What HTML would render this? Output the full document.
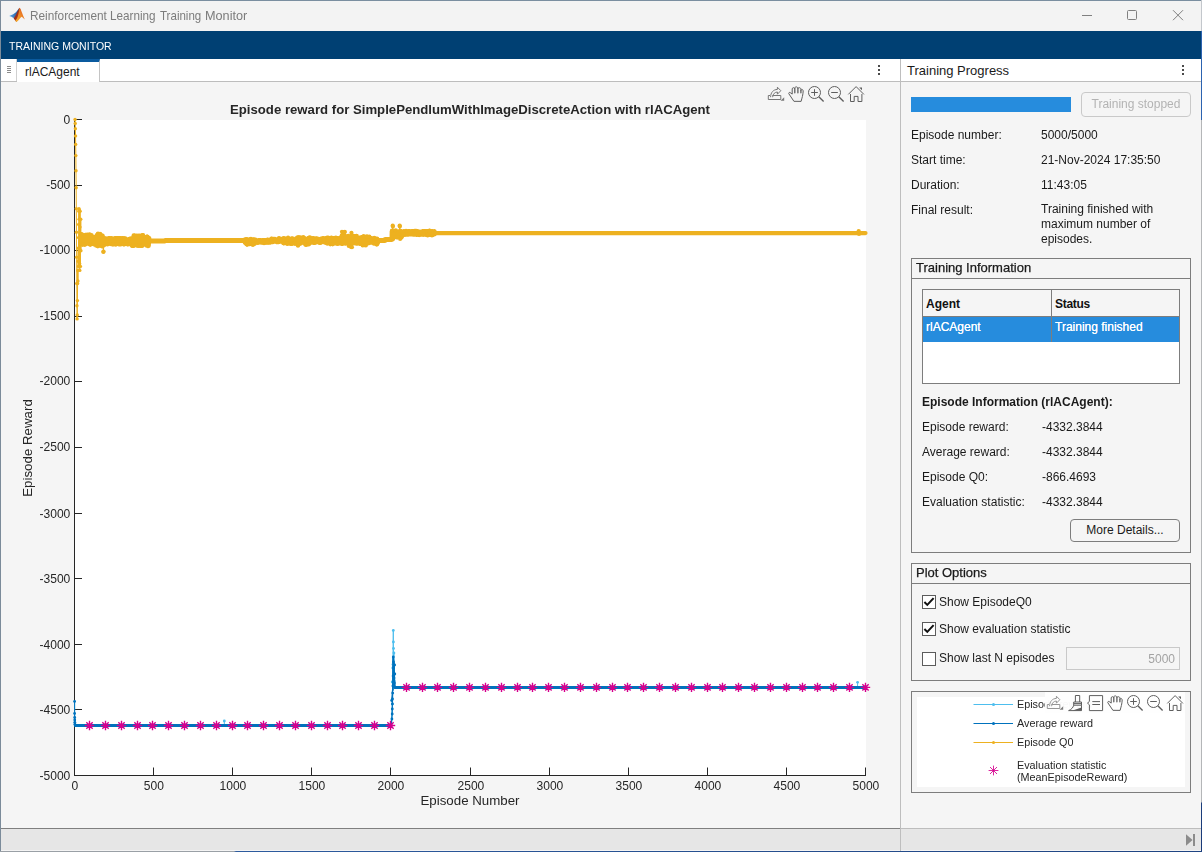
<!DOCTYPE html>
<html lang="en">
<head>
<meta charset="utf-8">
<title>Reinforcement Learning Training Monitor</title>
<style>
*{box-sizing:border-box;margin:0;padding:0}
html,body{width:1202px;height:852px;overflow:hidden;background:#f5f5f5}
body{position:relative;font-family:"Liberation Sans",Arial,sans-serif;font-size:12px;color:#1a1a1a;-webkit-font-smoothing:antialiased}
.abs,.win *{position:absolute}
.win{position:absolute;left:0;top:0;width:1202px;height:852px;background:#f5f5f5}
.edgeT{left:0;top:0;width:1202px;height:1px;background:#7a8ea0}
.edgeL{left:0;top:0;width:1px;height:852px;background:#7b8b9a}
.edgeR{left:1201px;top:0;width:1px;height:852px;background:linear-gradient(#c3c7cc 0,#c3c7cc 31px,#2c63b0 31px,#2c63b0 120px,#b4b6b8 120px,#b4b6b8 802px,#1c3f7c 803px,#1a3a78 100%)}
.edgeB{left:0;top:851px;width:1202px;height:1px;background:linear-gradient(90deg,#9aa0a6 0,#9aa0a6 234px,#2d5b9e 236px,#1f4482 100%)}
.titlebar{left:1px;top:1px;width:1200px;height:30px;background:#f3f3f3}
.title{left:0;top:8px;width:300px;height:16px;font-size:12.8px;line-height:16px;color:#7c7c7c;white-space:nowrap;will-change:transform}
.title span{top:0;transform-origin:0 0;white-space:nowrap}
.strip{left:1px;top:31px;width:1200px;height:28px;background:#004073}
.strip span{left:7.5px;top:8px;font-size:11.7px;line-height:14px;color:#fff;white-space:nowrap;transform:scaleX(.9);transform-origin:0 0}
.tabbar{left:1px;top:59px;width:899px;height:23px;background:#fff;border-bottom:1px solid #bdbdbd}
.tab{left:16px;top:0;width:83px;height:23px;background:#fff;border-top:3px solid #0a5a9e;border-right:1px solid #c4c4c4}
.tab span{left:8px;top:3px;line-height:14px;font-size:12px;white-space:nowrap;color:#1a1a1a}
.vdiv{left:900px;top:59px;width:1px;height:792px;background:#bebebe}
.rhead{left:901px;top:59px;width:300px;height:23px;background:#fff;border-bottom:1px solid #bdbdbd}
.rhead span{left:6px;top:4px;font-size:13px;line-height:15px;white-space:nowrap}
.status{left:1px;top:828px;width:1200px;height:23px;background:#e6e6e6;border-top:1px solid #bdbdbd;border-bottom:1px solid #f4f4f4}
.dot{width:2px;height:2px;background:#4a4a4a}
.lbl{white-space:nowrap;line-height:14px;font-size:12px}
.pbar{left:911px;top:97px;width:160px;height:15px;background:#268cdd}
.btn{border:1px solid #7d7d7d;border-radius:4px;background:#f5f5f5;text-align:center;white-space:nowrap}
.panel{border:1px solid #7d7d7d}
.phead{left:0;top:0;right:0;height:20px;border-bottom:1px solid #7d7d7d}
.phead span{left:4px;top:1px;font-size:13px;line-height:15px;white-space:nowrap;-webkit-text-stroke:0.25px #1a1a1a}
.cb{width:14px;height:14px;border:1px solid #5c5c5c;background:#fff}
svg{position:absolute;overflow:visible}
.plot{left:1px;top:82px;will-change:transform}
</style>
</head>
<body>
<div class="win">
<div class="titlebar"></div>
<div class="title"><span style="left:30px;transform:scaleX(.924)">Reinforcement </span><span style="left:109.9px;transform:scaleX(.915)">Learning </span><span style="left:159.5px;transform:scaleX(.902)">Training </span><span style="left:204.8px;transform:scaleX(.99)">Monitor</span></div>
<svg style="left:0;top:0" width="40" height="30" viewBox="0 0 40 30">
 <defs>
  <linearGradient id="lgB" x1="0" y1="0" x2="1" y2="0"><stop offset="0" stop-color="#5aa6e8"/><stop offset="1" stop-color="#1d4f92"/></linearGradient>
  <linearGradient id="lgO" x1="0" y1="1" x2="1" y2="0"><stop offset="0" stop-color="#f6b12c"/><stop offset="0.5" stop-color="#ef8a26"/><stop offset="1" stop-color="#d5401c"/></linearGradient>
  <linearGradient id="lgR" x1="0" y1="0" x2="1" y2="1"><stop offset="0" stop-color="#7a2418"/><stop offset="1" stop-color="#c23a1a"/></linearGradient>
 </defs>
 <path d="M9.2 15.9 L13.2 14.3 L16 12.2 L18.3 9.3 L19.3 8 L18.2 12 L16.3 15.6 L14.6 17.6 L13.4 18 L11.5 16.7 Z" fill="url(#lgB)"/>
 <path d="M13.6 18.2 L15.6 15.6 L17.8 11 L19.4 7.8 L20.4 9.5 L19.8 14.5 L18 19.5 L16.4 21.9 L14.8 20 Z" fill="url(#lgR)"/>
 <path d="M19.5 7.7 C20.6 8.2 21.4 11 22.3 13.6 C23.2 16.2 24 18 24.9 19.4 C23.6 18.6 22.6 17.4 21.6 16.8 C20.4 17.6 19.4 19.4 18.2 20.6 C17.4 21.4 16.8 21.9 16.3 22 L15.4 20.6 C16.6 19.4 17.6 17 18.3 14.4 C18.9 12 19.2 9.6 19.5 7.7 Z" fill="url(#lgO)"/>
</svg>

<svg style="left:1070px;top:1px" width="131" height="30" viewBox="1070 1 131 30" fill="none" stroke="#808080" stroke-width="1">
 <path d="M1082 15.5H1092"/>
 <rect x="1127.5" y="10.5" width="9" height="9" rx="1"/>
 <path d="M1173 10.2L1183 20.2M1183 10.2L1173 20.2"/>
</svg>

<div class="strip"><span>TRAINING MONITOR</span></div>
<div class="tabbar"><div class="tab"><span>rlACAgent</span></div></div>
<div class="rhead"><span>Training Progress</span></div>
<div style="left:7px;top:66px;width:4px;height:1px;background:#8c8c8c"></div>
<div style="left:7px;top:68px;width:4px;height:1px;background:#8c8c8c"></div>
<div style="left:7px;top:70px;width:4px;height:1px;background:#8c8c8c"></div>
<div style="left:7px;top:72px;width:4px;height:1px;background:#8c8c8c"></div>
<div style="left:1px;top:59px;width:16px;height:22px;border-right:1px solid #d0d0d0"></div>
<div class="dot" style="left:878px;top:65px"></div><div class="dot" style="left:878px;top:69px"></div><div class="dot" style="left:878px;top:73px"></div>
<div class="dot" style="left:1182px;top:65px"></div><div class="dot" style="left:1182px;top:69px"></div><div class="dot" style="left:1182px;top:73px"></div>

<svg class="plot" width="899" height="746" viewBox="1 82 899 746">
<rect x="75" y="120" width="791" height="656" fill="#fff"/>
<path d="M74.5 119V776M74 775.5H866M74.5 775.5V767.5M153.5 775.5V767.5M232.5 775.5V767.5M311.5 775.5V767.5M390.5 775.5V767.5M470.5 775.5V767.5M549.5 775.5V767.5M628.5 775.5V767.5M707.5 775.5V767.5M786.5 775.5V767.5M865.5 775.5V767.5M74.5 119.5H82M74.5 185.5H82M74.5 250.5H82M74.5 316.5H82M74.5 381.5H82M74.5 447.5H82M74.5 513.5H82M74.5 578.5H82M74.5 644.5H82M74.5 709.5H82M74.5 775.5H82" stroke="#262626" stroke-width="1" fill="none"/>
<g fill="none" stroke-linejoin="round" stroke-linecap="round">
<polyline points="75.69,725.5 391.14,725.5" stroke="#4DBEEE" stroke-width="2.8"/><polyline points="394.90,687.4 865.50,687.4" stroke="#4DBEEE" stroke-width="2.8"/><polyline points="74.60,701.4 74.70,716.0 74.90,723.0 75.30,725.5" stroke="#4DBEEE" stroke-width="1"/><polyline points="391.14,725.5 392.30,704.0 392.80,668.0 393.30,630.4 393.40,642.0 393.50,648.5 393.60,676.0 393.00,664.5 393.90,653.0 394.20,681.0 392.20,682.0 394.60,687.4" stroke="#4DBEEE" stroke-width="1"/><path d="M224.32 721.0V725.5" stroke="#4DBEEE" stroke-width="1"/><path d="M857.59 682.3V687.4" stroke="#4DBEEE" stroke-width="1"/><g fill="#4DBEEE" stroke="none"><circle cx="392.30" cy="704.0" r="1.4"/><circle cx="392.80" cy="668.0" r="1.4"/><circle cx="393.30" cy="630.4" r="1.4"/><circle cx="393.40" cy="642.0" r="1.4"/><circle cx="393.50" cy="648.5" r="1.4"/><circle cx="393.60" cy="676.0" r="1.4"/><circle cx="393.00" cy="664.5" r="1.4"/><circle cx="393.90" cy="653.0" r="1.4"/><circle cx="394.20" cy="681.0" r="1.4"/><circle cx="392.20" cy="682.0" r="1.4"/><circle cx="224.32" cy="721.0" r="1.4"/><circle cx="857.59" cy="682.3" r="1.4"/></g><polyline points="75.69,725.5 391.14,725.5" stroke="#0072BD" stroke-width="3.0"/><polyline points="394.90,687.4 865.50,687.4" stroke="#0072BD" stroke-width="3.0"/><polyline points="74.60,701.4 74.60,713.5 74.70,717.5 74.75,720.0 74.80,722.3 74.90,724.2 75.30,725.5" stroke="#0072BD" stroke-width="1"/><polyline points="391.14,725.5 391.90,719.0 392.20,714.0 392.30,709.0 392.40,704.0 392.50,699.0 392.70,693.0 391.70,700.5 392.90,686.0 393.10,676.0 393.30,657.0 393.50,662.0 394.60,665.0 393.60,668.0 394.80,674.0 394.00,678.0 394.40,683.0 394.90,687.4" stroke="#0072BD" stroke-width="1.2"/><polyline points="392.90,690.0 393.30,657.5 393.90,668.0 394.30,680.0 394.90,687.4" stroke="#0072BD" stroke-width="1.8"/><g fill="#0072BD" stroke="none"><circle cx="74.60" cy="701.4" r="1.4"/><circle cx="74.60" cy="713.5" r="1.4"/><circle cx="74.70" cy="717.5" r="1.4"/><circle cx="74.75" cy="720.0" r="1.4"/><circle cx="74.80" cy="722.3" r="1.4"/><circle cx="74.90" cy="724.2" r="1.4"/><circle cx="75.30" cy="725.5" r="1.4"/><circle cx="391.90" cy="719.0" r="1.4"/><circle cx="392.20" cy="714.0" r="1.4"/><circle cx="392.30" cy="709.0" r="1.4"/><circle cx="392.40" cy="704.0" r="1.4"/><circle cx="392.50" cy="699.0" r="1.4"/><circle cx="392.70" cy="693.0" r="1.4"/><circle cx="391.70" cy="700.5" r="1.4"/><circle cx="392.90" cy="686.0" r="1.4"/><circle cx="393.10" cy="676.0" r="1.4"/><circle cx="393.30" cy="657.0" r="1.4"/><circle cx="393.50" cy="662.0" r="1.4"/><circle cx="394.60" cy="665.0" r="1.4"/><circle cx="393.60" cy="668.0" r="1.4"/><circle cx="394.80" cy="674.0" r="1.4"/><circle cx="394.00" cy="678.0" r="1.4"/><circle cx="394.40" cy="683.0" r="1.4"/></g>
<polyline points="75.06,119.5 75.22,123.4 75.37,128.7 75.53,135.9 75.69,144.4 75.85,155.6 76.01,170.7 76.16,187.7 76.32,208.7 76.48,232.3 76.64,257.3 76.80,283.5 76.96,305.8 77.11,318.9 77.27,315.0 77.43,300.6 77.59,283.5 77.75,270.4 77.90,280.9 78.06,261.2 78.22,248.1 78.38,266.4 78.54,237.6 78.69,224.5 78.85,211.3 79.01,208.7 79.17,219.2 79.33,210.0 79.49,237.6 79.64,263.8 79.80,270.4 79.96,227.1 80.12,211.3 80.28,244.1 80.43,266.4 80.59,235.0 80.75,219.2 80.91,250.7 81.07,233.6 81.22,242.8 81.38,236.2 81.54,235.4 81.70,238.2 81.86,234.7 82.02,235.4 82.17,244.3 82.33,243.8 82.49,240.3 82.65,244.3 82.81,240.0 82.96,238.7 83.12,240.2 83.28,241.2 83.44,240.2 83.60,235.7 83.75,240.1 83.91,239.5 84.07,242.1 84.23,243.5 84.39,237.1 84.55,242.2 84.70,244.7 84.86,241.7 85.02,244.1 85.18,238.7 85.34,236.2 85.49,235.1 85.65,242.0 85.81,243.1 85.97,241.4 86.13,240.3 86.28,242.7 86.44,239.3 86.60,235.3 86.76,240.9 86.92,242.6 87.08,238.4 87.23,235.0 87.39,236.3 87.55,235.3 87.71,236.0 87.87,238.5 88.02,235.5 88.18,240.0 88.34,242.5 88.50,237.4 88.66,238.2 88.81,243.8 88.97,236.4 89.13,237.0 89.29,240.3 89.45,234.8 89.61,238.3 89.76,243.8 89.92,239.6 90.08,241.2 90.24,244.6 90.40,239.3 90.55,236.6 90.71,238.9 90.87,240.5 91.03,240.1 91.19,243.8 91.34,235.4 91.50,238.3 91.66,243.8 91.82,239.3 91.98,239.4 92.14,243.4 92.29,240.4 92.45,239.4 92.61,238.3 92.77,242.0 92.93,242.0 93.08,240.4 93.24,241.7 93.40,240.6 93.56,238.7 93.72,243.3 93.87,239.7 94.03,241.7 94.19,243.0 94.35,242.1 94.51,239.3 94.67,241.4 94.82,238.0 94.98,242.6 95.14,244.5 95.30,236.9 95.46,240.0 95.61,241.3 95.77,242.9 95.93,237.1 96.09,243.4 96.25,239.9 96.40,245.4 96.56,239.7 96.72,241.2 96.88,243.4 97.04,238.3 97.19,235.3 97.35,239.7 97.51,239.8 97.67,241.2 97.83,246.3 97.99,233.5 98.14,242.8 98.30,236.4 98.46,238.1 98.62,245.2 98.78,238.9 98.93,242.5 99.09,235.9 99.25,244.5 99.41,236.1 99.57,245.3 99.72,238.3 99.88,235.9 100.04,233.9 100.20,239.3 100.36,243.6 100.52,237.2 100.67,237.1 100.83,237.3 100.99,235.9 101.15,238.4 101.31,240.9 101.46,239.1 101.62,240.0 101.78,240.3 101.94,246.3 102.10,243.1 102.25,236.0 102.41,235.8 102.57,246.3 102.73,240.7 102.89,237.5 103.05,240.1 103.20,242.9 103.36,252.0 103.52,251.5 103.68,242.1 103.84,240.4 103.99,244.9 104.15,243.3 104.31,240.0 104.47,243.6 104.63,239.3 104.78,240.9 104.94,238.3 105.10,240.2 105.26,242.7 105.42,242.0 105.58,239.9 105.73,241.1 105.89,239.1 106.05,239.4 106.21,239.8 106.37,243.9 106.52,240.8 106.68,239.0 106.84,240.4 107.00,242.3 107.16,241.3 107.31,243.7 107.47,243.5 107.63,243.3 107.79,244.0 107.95,240.0 108.11,240.8 108.26,243.0 108.42,239.4 108.58,241.6 108.74,239.0 108.90,238.3 109.05,238.2 109.21,239.0 109.37,238.9 109.53,241.0 109.69,241.5 109.84,240.0 110.00,241.4 110.16,239.1 110.32,238.8 110.48,240.2 110.64,242.7 110.79,241.3 110.95,240.4 111.11,244.0 111.27,238.2 111.43,241.0 111.58,242.1 111.74,241.5 111.90,243.8 112.06,239.7 112.22,239.6 112.37,242.5 112.53,243.9 112.69,243.1 112.85,244.2 113.01,244.5 113.17,240.1 113.32,240.1 113.48,239.4 113.64,240.0 113.80,243.8 113.96,239.9 114.11,240.2 114.27,238.6 114.43,241.1 114.59,239.6 114.75,238.6 114.90,239.0 115.06,238.8 115.22,244.3 115.38,238.2 115.54,243.3 115.69,240.3 115.85,239.4 116.01,242.0 116.17,244.4 116.33,239.3 116.49,241.3 116.64,242.9 116.80,241.7 116.96,242.2 117.12,239.8 117.28,238.2 117.43,240.6 117.59,238.8 117.75,238.3 117.91,238.1 118.07,241.4 118.22,238.9 118.38,239.9 118.54,244.1 118.70,239.8 118.86,241.0 119.02,239.0 119.17,240.1 119.33,238.5 119.49,239.9 119.65,240.2 119.81,238.6 119.96,244.5 120.12,238.1 120.28,241.3 120.44,241.1 120.60,243.4 120.75,243.8 120.91,238.6 121.07,243.0 121.23,241.0 121.39,239.7 121.55,239.7 121.70,239.3 121.86,243.7 122.02,243.0 122.18,243.3 122.34,239.8 122.49,241.2 122.65,238.0 122.81,240.7 122.97,240.8 123.13,239.2 123.28,240.3 123.44,240.7 123.60,239.6 123.76,244.1 123.92,244.5 124.08,240.5 124.23,240.0 124.39,238.5 124.55,242.0 124.71,243.8 124.87,240.3 125.02,242.8 125.18,238.7 125.34,240.7 125.50,241.5 125.66,239.0 125.81,240.8 125.97,239.3 126.13,241.2 126.29,241.5 126.45,240.8 126.61,239.9 126.76,242.1 126.92,239.8 127.08,242.2 127.24,242.0 127.40,244.3 127.55,240.3 127.71,240.9 127.87,239.9 128.03,241.6 128.19,240.5 128.34,239.6 128.50,244.2 128.66,239.7 128.82,242.6 128.98,241.7 129.14,242.3 129.29,242.8 129.45,239.1 129.61,240.6 129.77,240.9 129.93,242.9 130.08,239.2 130.24,242.7 130.40,243.8 130.56,238.9 130.72,243.6 130.87,241.1 131.03,242.8 131.19,239.4 131.35,239.1 131.51,242.3 131.67,243.4 131.82,238.5 131.98,241.6 132.14,246.0 132.30,240.5 132.46,242.8 132.61,245.6 132.77,239.2 132.93,241.2 133.09,246.0 133.25,238.5 133.40,237.8 133.56,240.7 133.72,245.8 133.88,235.7 134.04,241.9 134.19,237.9 134.35,244.3 134.51,235.8 134.67,239.5 134.83,237.4 134.99,242.5 135.14,237.4 135.30,238.4 135.46,237.7 135.62,242.8 135.78,244.6 135.93,237.2 136.09,239.5 136.25,244.6 136.41,239.2 136.57,244.8 136.72,235.9 136.88,245.5 137.04,238.5 137.20,236.2 137.36,237.3 137.52,240.5 137.67,238.4 137.83,243.5 137.99,239.7 138.15,236.2 138.31,246.0 138.46,244.7 138.62,238.9 138.78,243.3 138.94,235.9 139.10,239.0 139.25,237.3 139.41,244.1 139.57,245.3 139.73,239.3 139.89,239.9 140.05,236.0 140.20,236.1 140.36,238.9 140.52,244.6 140.68,246.0 140.84,242.4 140.99,243.2 141.15,236.1 141.31,236.5 141.47,239.9 141.63,243.0 141.78,243.3 141.94,240.2 142.10,245.9 142.26,241.3 142.42,238.5 142.58,243.0 142.73,235.1 142.89,239.4 143.05,241.8 143.21,240.9 143.37,241.2 143.52,239.3 143.68,240.6 143.84,239.0 144.00,238.8 144.16,241.6 144.31,239.5 144.47,240.6 144.63,243.5 144.79,243.4 144.95,239.3 145.11,241.1 145.26,239.1 145.42,244.0 145.58,244.0 145.74,239.5 145.90,239.3 146.05,240.9 146.21,239.1 146.37,245.2 146.53,237.5 146.69,239.2 146.84,242.9 147.00,241.2 147.16,236.5 147.32,244.6 147.48,237.3 147.64,238.0 147.79,245.8 147.95,245.4 148.11,244.8 148.27,239.3 148.43,245.6 148.58,242.4 148.74,238.9 148.90,238.2 149.06,239.3 149.22,241.0 164.87,241.0 165.03,240.5 244.88,240.5 245.04,242.4 245.20,239.8 245.35,242.5 245.51,241.0 245.67,242.9 245.83,240.0 245.99,241.3 246.14,242.3 246.30,239.2 246.46,243.7 246.62,241.4 246.78,244.3 246.93,244.6 247.09,241.4 247.25,241.5 247.41,240.2 247.57,244.3 247.73,239.8 247.88,242.3 248.04,240.1 248.20,241.2 248.36,240.3 248.52,241.8 248.67,240.2 248.83,243.0 248.99,240.5 249.15,243.5 249.31,241.7 249.46,243.9 249.62,242.5 249.78,242.3 249.94,242.2 250.10,240.5 250.26,242.0 250.41,239.3 250.57,240.7 250.73,243.3 250.89,238.9 251.05,241.3 251.20,243.1 251.36,242.3 251.52,240.7 251.68,241.2 251.84,240.5 251.99,244.4 252.15,242.2 252.31,243.1 252.47,241.4 252.63,244.3 252.78,244.4 252.94,239.9 253.10,243.4 253.26,242.6 253.42,244.6 253.58,239.9 253.73,239.5 253.89,241.7 254.05,243.4 254.21,242.9 254.37,240.0 254.52,242.8 254.68,243.3 254.84,243.0 255.00,241.8 255.16,240.6 255.31,241.8 255.47,239.9 255.63,240.4 255.79,242.5 255.95,240.4 256.11,240.7 256.26,241.7 256.42,242.1 256.58,241.6 256.74,240.6 256.90,241.6 257.05,242.0 257.21,242.3 257.37,241.1 257.53,241.3 257.69,241.9 257.84,242.7 258.00,242.1 258.16,242.2 258.32,241.9 258.48,241.0 258.64,241.2 258.79,240.5 258.95,241.6 259.11,240.4 259.27,240.7 259.43,240.9 259.58,241.6 259.74,241.6 259.90,240.7 260.06,240.9 260.22,240.6 260.37,242.1 260.53,241.2 260.69,240.5 260.85,241.5 261.01,241.7 261.17,242.2 261.32,240.9 261.48,240.5 261.64,241.2 261.80,240.6 261.96,240.5 262.11,242.2 262.27,240.8 262.43,241.4 262.59,242.0 262.75,241.0 262.90,240.5 263.06,241.9 263.22,240.5 263.38,241.9 263.54,241.9 263.70,240.9 263.85,240.9 264.01,243.2 264.17,242.2 264.33,240.5 264.49,241.7 264.64,242.2 264.80,241.0 264.96,242.1 265.12,240.3 265.28,242.0 265.43,240.8 265.59,240.8 265.75,241.6 265.91,242.1 266.07,242.3 266.23,241.5 266.38,241.5 266.54,240.0 266.70,241.5 266.86,240.9 267.02,240.6 267.17,240.7 267.33,239.8 267.49,242.3 267.65,240.5 267.81,241.7 267.96,239.7 268.12,242.5 268.28,241.5 268.44,242.1 268.60,241.8 268.76,240.9 268.91,240.5 269.07,242.2 269.23,240.6 269.39,241.7 269.55,240.7 269.70,241.7 269.86,241.1 270.02,241.1 270.18,240.5 270.34,242.2 270.49,241.6 270.65,241.0 270.81,241.9 270.97,240.1 271.13,240.5 271.29,241.4 271.44,241.9 271.60,238.8 271.76,239.2 271.92,239.3 272.08,241.3 272.23,240.6 272.39,240.4 272.55,239.5 272.71,241.6 272.87,239.5 273.02,241.1 273.18,241.7 273.34,239.3 273.50,239.3 273.66,241.5 273.81,240.2 273.97,240.1 274.13,240.2 274.29,239.5 274.45,240.8 274.61,239.4 274.76,240.9 274.92,239.1 275.08,240.5 275.24,240.3 275.40,239.9 275.55,240.9 275.71,239.7 275.87,240.8 276.03,240.4 276.19,241.1 276.34,240.7 276.50,241.7 276.66,240.7 276.82,239.7 276.98,239.7 277.14,241.7 277.29,240.8 277.45,239.5 277.61,239.9 277.77,239.8 277.93,241.5 278.08,241.4 278.24,239.1 278.40,240.2 278.56,241.7 278.72,239.1 278.87,241.0 279.03,238.1 279.19,240.6 279.35,240.2 279.51,241.0 279.67,241.1 279.82,241.4 279.98,240.8 280.14,239.9 280.30,239.3 280.46,241.2 280.61,240.7 280.77,240.2 280.93,240.7 281.09,240.9 281.25,239.5 281.40,241.2 281.56,240.4 281.72,239.2 281.88,239.5 282.04,241.6 282.20,239.3 282.35,240.5 282.51,240.4 282.67,241.3 282.83,240.2 282.99,239.6 283.14,240.2 283.30,239.1 283.46,240.1 283.62,243.3 283.78,238.0 283.93,241.6 284.09,239.7 284.25,241.7 284.41,240.8 284.57,242.0 284.73,239.5 284.88,241.9 285.04,241.3 285.20,241.0 285.36,242.7 285.52,241.3 285.67,242.1 285.83,239.8 285.99,239.1 286.15,240.1 286.31,239.7 286.46,239.6 286.62,239.3 286.78,243.3 286.94,239.9 287.10,241.2 287.26,243.0 287.41,240.2 287.57,243.9 287.73,242.1 287.89,238.6 288.05,237.7 288.20,239.0 288.36,239.6 288.52,240.0 288.68,242.4 288.84,239.3 288.99,241.2 289.15,241.4 289.31,241.9 289.47,239.4 289.63,240.8 289.79,240.4 289.94,240.9 290.10,239.6 290.26,240.7 290.42,244.0 290.58,239.6 290.73,241.1 290.89,239.2 291.05,241.5 291.21,239.8 291.37,240.4 291.52,241.5 291.68,240.1 291.84,238.6 292.00,243.9 292.16,243.5 292.31,238.7 292.47,241.2 292.63,242.3 292.79,240.6 292.95,241.9 293.11,240.4 293.26,240.9 293.42,239.8 293.58,240.3 293.74,239.7 293.90,242.7 294.05,242.0 294.21,239.9 294.37,241.1 294.53,241.9 294.69,243.6 294.84,243.0 295.00,243.6 295.16,241.9 295.32,241.2 295.48,241.2 295.64,241.1 295.79,239.5 295.95,240.5 296.11,239.0 296.27,238.7 296.43,242.5 296.58,240.1 296.74,241.9 296.90,239.7 297.06,241.3 297.22,241.4 297.37,244.2 297.53,237.3 297.69,241.3 297.85,241.2 298.01,245.7 298.17,242.6 298.32,243.3 298.48,239.4 298.64,244.0 298.80,241.3 298.96,237.0 299.11,240.2 299.27,241.6 299.43,242.1 299.59,243.1 299.75,241.0 299.90,242.8 300.06,242.3 300.22,241.2 300.38,241.8 300.54,243.2 300.70,238.1 300.85,237.6 301.01,241.5 301.17,242.7 301.33,239.9 301.49,242.2 301.64,239.1 301.80,238.8 301.96,239.1 302.12,240.8 302.28,240.6 302.43,242.3 302.59,239.7 302.75,241.7 302.91,241.4 303.07,242.1 303.23,237.2 303.38,240.5 303.54,240.2 303.70,241.5 303.86,242.6 304.02,238.2 304.17,240.5 304.33,242.6 304.49,238.4 304.65,242.6 304.81,241.3 304.96,242.8 305.12,241.9 305.28,240.1 305.44,244.8 305.60,242.3 305.76,239.4 305.91,241.9 306.07,239.3 306.23,242.3 306.39,240.7 306.55,244.8 306.70,241.3 306.86,243.0 307.02,240.8 307.18,239.2 307.34,239.1 307.49,240.1 307.65,240.4 307.81,239.0 307.97,244.2 308.13,241.6 308.29,239.0 308.44,240.0 308.60,238.3 308.76,244.5 308.92,243.2 309.08,238.7 309.23,241.4 309.39,238.9 309.55,240.0 309.71,240.2 309.87,237.3 310.02,240.4 310.18,241.8 310.34,243.0 310.50,239.2 310.66,239.7 310.82,242.2 310.97,240.1 311.13,241.2 311.29,241.9 311.45,239.1 311.61,239.0 311.76,239.7 311.92,241.2 312.08,240.4 312.24,239.9 312.40,238.3 312.55,240.8 312.71,239.3 312.87,239.7 313.03,240.4 313.19,239.7 313.34,241.1 313.50,238.2 313.66,241.5 313.82,242.9 313.98,240.3 314.14,242.9 314.29,240.4 314.45,241.5 314.61,240.9 314.77,239.6 314.93,242.6 315.08,241.6 315.24,240.2 315.40,239.8 315.56,240.0 315.72,240.5 315.87,241.7 316.03,242.0 316.19,238.4 316.35,239.3 316.51,242.0 316.67,239.8 316.82,239.7 316.98,240.2 317.14,241.5 317.30,239.4 317.46,240.3 317.61,240.5 317.77,241.4 317.93,239.8 318.09,239.1 318.25,239.8 318.40,241.6 318.56,239.7 318.72,240.8 318.88,241.7 319.04,241.3 319.20,239.4 319.35,240.9 319.51,239.9 319.67,242.9 319.83,240.6 319.99,239.8 320.14,241.9 320.30,243.0 320.46,241.7 320.62,239.5 320.78,240.1 320.93,240.1 321.09,239.0 321.25,240.3 321.41,239.3 321.57,241.5 321.73,239.9 321.88,240.1 322.04,239.1 322.20,241.9 322.36,240.5 322.52,240.6 322.67,238.7 322.83,239.3 322.99,241.5 323.15,238.0 323.31,239.8 323.46,240.9 323.62,239.7 323.78,240.0 323.94,238.9 324.10,240.5 324.26,239.8 324.41,240.2 324.57,240.8 324.73,239.4 324.89,241.3 325.05,242.2 325.20,239.9 325.36,242.2 325.52,240.0 325.68,241.9 325.84,239.2 325.99,240.2 326.15,242.1 326.31,242.1 326.47,238.2 326.63,242.8 326.79,239.2 326.94,241.2 327.10,240.7 327.26,243.4 327.42,239.1 327.58,240.0 327.73,240.3 327.89,237.9 328.05,239.3 328.21,239.3 328.37,242.7 328.52,239.2 328.68,240.2 328.84,239.4 329.00,241.3 329.16,241.0 329.32,240.6 329.47,240.3 329.63,238.7 329.79,238.6 329.95,240.0 330.11,239.2 330.26,244.3 330.42,240.9 330.58,239.0 330.74,240.3 330.90,241.1 331.05,239.5 331.21,239.1 331.37,239.9 331.53,238.0 331.69,242.3 331.85,240.8 332.00,239.4 332.16,239.5 332.32,238.8 332.48,243.7 332.64,244.3 332.79,241.8 332.95,243.0 333.11,242.7 333.27,241.4 333.43,239.0 333.58,239.4 333.74,238.4 333.90,242.7 334.06,239.3 334.22,241.2 334.37,240.1 334.53,240.0 334.69,238.5 334.85,243.0 335.01,242.3 335.17,241.1 335.32,242.3 335.48,239.4 335.64,239.8 335.80,241.0 335.96,238.0 336.11,243.0 336.27,239.5 336.43,242.0 336.59,239.9 336.75,242.1 336.90,242.9 337.06,239.2 337.22,242.9 337.38,242.8 337.54,243.9 337.70,242.6 337.85,240.7 338.01,240.6 338.17,241.4 338.33,239.8 338.49,239.7 338.64,241.4 338.80,238.5 338.96,240.0 339.12,240.9 339.28,242.9 339.43,240.2 339.59,243.0 339.75,240.7 339.91,238.8 340.07,242.9 340.23,240.6 340.38,242.5 340.54,242.1 340.70,242.5 340.86,238.7 341.02,239.8 341.17,237.4 341.33,240.7 341.49,238.6 341.65,240.8 341.81,243.6 341.96,231.8 342.12,236.7 342.28,235.1 342.44,240.2 342.60,240.9 342.76,243.5 342.91,239.1 343.07,237.1 343.23,236.8 343.39,237.2 343.55,242.2 343.70,242.1 343.86,232.9 344.02,237.0 344.18,238.0 344.34,232.1 344.49,236.4 344.65,240.7 344.81,231.9 344.97,243.2 345.13,240.7 345.29,236.3 345.44,242.4 345.60,242.8 345.76,238.3 345.92,243.2 346.08,243.2 346.23,238.9 346.39,237.6 346.55,242.6 346.71,242.0 346.87,237.3 347.02,237.4 347.18,238.2 347.34,236.8 347.50,238.9 347.66,236.4 347.82,242.2 347.97,237.8 348.13,238.1 348.29,236.2 348.45,238.5 348.61,241.3 348.76,246.0 348.92,240.2 349.08,242.0 349.24,238.7 349.40,239.0 349.55,240.4 349.71,239.6 349.87,242.5 350.03,243.1 350.19,240.5 350.35,243.5 350.50,239.0 350.66,236.9 350.82,241.1 350.98,246.9 351.14,236.2 351.29,237.1 351.45,232.8 351.61,237.7 351.77,242.7 351.93,247.2 352.08,237.4 352.24,236.6 352.40,242.2 352.56,238.7 352.72,239.5 352.87,240.7 353.03,243.1 353.19,238.7 353.35,241.2 353.51,236.1 353.67,239.5 353.82,239.0 353.98,236.7 354.14,238.0 354.30,237.6 354.46,239.0 354.61,239.2 354.77,237.1 354.93,240.1 355.09,243.1 355.25,237.7 355.40,239.9 355.56,241.0 355.72,243.1 355.88,241.8 356.04,242.8 356.20,240.4 356.35,243.4 356.51,236.2 356.67,241.9 356.83,242.9 356.99,241.6 357.14,240.6 357.30,240.0 357.46,243.2 357.62,238.5 357.78,241.2 357.93,240.7 358.09,241.6 358.25,241.6 358.41,242.2 358.57,238.6 358.73,242.5 358.88,238.5 359.04,242.2 359.20,239.0 359.36,238.5 359.52,238.0 359.67,238.3 359.83,240.4 359.99,241.8 360.15,243.8 360.31,241.7 360.46,241.8 360.62,238.9 360.78,238.2 360.94,243.2 361.10,238.4 361.26,242.6 361.41,238.7 361.57,237.5 361.73,237.7 361.89,239.3 362.05,239.3 362.20,238.4 362.36,240.9 362.52,240.9 362.68,245.5 362.84,238.0 362.99,243.4 363.15,238.1 363.31,240.1 363.47,240.8 363.63,236.2 363.79,243.2 363.94,239.0 364.10,238.3 364.26,245.2 364.42,238.6 364.58,242.6 364.73,238.5 364.89,242.5 365.05,239.4 365.21,242.5 365.37,239.7 365.52,239.7 365.68,238.9 365.84,245.4 366.00,240.5 366.16,238.3 366.32,240.5 366.47,237.3 366.63,242.4 366.79,236.3 366.95,238.6 367.11,237.7 367.26,241.7 367.42,238.3 367.58,236.8 367.74,239.2 367.90,240.9 368.05,242.1 368.21,239.0 368.37,240.4 368.53,238.5 368.69,243.3 368.85,240.2 369.00,238.3 369.16,240.6 369.32,236.5 369.48,240.8 369.64,239.7 369.79,240.8 369.95,241.9 370.11,240.7 370.27,238.7 370.43,241.0 370.58,240.4 370.74,242.3 370.90,238.8 371.06,238.9 371.22,242.4 371.38,241.3 371.53,241.7 371.69,238.5 371.85,241.1 372.01,239.8 372.17,241.0 372.32,242.1 372.48,241.8 372.64,241.6 372.80,240.1 372.96,241.7 373.11,240.7 373.27,240.1 373.43,241.0 373.59,242.4 373.75,239.9 373.90,243.7 374.06,238.8 374.22,237.8 374.38,239.6 374.54,239.4 374.70,240.0 374.85,242.7 375.01,240.8 375.17,243.1 375.33,239.0 375.49,240.2 375.64,241.6 375.80,241.4 375.96,240.8 376.12,240.6 376.28,239.1 376.43,240.2 376.59,242.5 376.75,244.3 376.91,238.8 377.07,239.7 377.23,243.4 377.38,243.2 377.54,240.2 377.70,242.8 377.86,241.2 378.02,240.5 384.97,240.5 385.13,239.5 391.93,239.5 392.09,230.7 392.25,231.6 392.40,231.8 392.56,234.7 392.72,225.5 392.88,226.5 393.04,232.6 393.20,239.0 393.35,234.1 393.51,232.1 393.67,232.5 393.83,235.2 393.99,233.8 394.14,233.1 394.30,233.9 394.46,232.7 394.62,234.6 394.78,235.2 394.93,233.4 395.09,237.1 395.25,234.4 395.41,235.0 395.57,236.1 395.73,230.3 395.88,234.7 396.04,232.9 396.20,235.9 396.36,234.9 396.52,235.3 396.67,234.0 396.83,233.2 396.99,233.5 397.15,237.6 397.31,235.4 397.46,236.0 397.62,236.5 397.78,232.5 397.94,234.9 398.10,233.5 398.26,236.2 398.41,232.2 398.57,232.7 398.73,234.8 398.89,231.8 399.05,236.2 399.20,233.0 399.36,233.8 399.52,235.0 399.68,225.5 399.84,226.5 399.99,236.0 400.15,239.0 400.31,232.7 400.47,230.9 400.63,234.5 400.79,234.8 400.94,235.2 401.10,234.5 401.26,237.6 401.42,237.4 401.58,234.7 401.73,232.5 401.89,235.3 402.05,232.7 402.21,232.5 402.37,235.3 402.52,235.3 402.68,232.7 402.84,234.2 403.00,235.1 403.16,231.6 403.32,233.7 403.47,231.7 403.63,231.9 403.79,231.7 403.95,232.8 404.11,233.3 404.26,233.5 404.42,232.5 404.58,232.2 404.74,233.8 404.90,232.4 405.05,234.5 405.21,232.3 405.37,234.4 405.53,231.5 405.69,233.5 405.85,232.6 406.00,232.2 406.16,231.7 406.32,231.3 406.48,232.1 406.64,232.3 406.79,233.7 406.95,234.1 407.11,233.9 407.27,232.5 407.43,232.8 407.58,232.1 407.74,234.2 407.90,232.1 408.06,231.5 408.22,231.5 408.38,234.3 408.53,232.5 408.69,232.6 408.85,232.6 409.01,234.1 409.17,231.2 409.32,232.2 409.48,233.8 409.64,232.4 409.80,232.1 409.96,231.9 410.11,234.1 410.27,233.8 410.43,232.3 410.59,233.0 410.75,232.0 410.90,233.3 411.06,233.2 411.22,232.1 411.38,232.6 411.54,234.1 411.70,234.1 411.85,232.4 412.01,231.3 412.17,231.9 412.33,233.0 412.49,233.8 412.64,232.7 412.80,233.4 412.96,232.7 413.12,234.2 413.28,232.1 413.43,231.5 413.59,233.3 413.75,233.6 413.91,231.6 414.07,231.7 414.23,234.4 414.38,233.1 414.54,230.8 414.70,233.7 414.86,231.8 415.02,233.0 415.17,232.5 415.33,234.4 415.49,233.7 415.65,232.0 415.81,231.7 415.96,231.0 416.12,232.6 416.28,230.8 416.44,233.2 416.60,234.5 416.76,233.7 416.91,232.4 417.07,234.5 417.23,232.6 417.39,231.9 417.55,231.5 417.70,234.3 417.86,233.3 418.02,232.2 418.18,231.8 418.34,233.9 418.49,231.6 418.65,232.5 418.81,233.2 418.97,234.5 419.13,235.1 419.29,234.5 419.44,233.4 419.60,232.6 419.76,232.7 419.92,233.3 420.08,232.4 420.23,233.1 420.39,233.3 420.55,234.3 420.71,233.7 420.87,232.9 421.02,231.9 421.18,233.1 421.34,233.1 421.50,232.2 421.66,234.0 421.82,233.4 421.97,234.2 422.13,231.6 422.29,234.0 422.45,231.8 422.61,232.2 422.76,232.6 422.92,233.1 423.08,231.7 423.24,234.5 423.40,232.8 423.55,233.9 423.71,231.9 423.87,232.6 424.03,232.2 424.19,232.5 424.35,231.5 424.50,233.2 424.66,231.1 424.82,234.3 424.98,232.3 425.14,233.1 425.29,231.7 425.45,234.4 425.61,233.9 425.77,233.7 425.93,231.6 426.08,234.5 426.24,233.3 426.40,232.2 426.56,231.9 426.72,234.5 426.88,233.2 427.03,231.1 427.19,234.9 427.35,233.0 427.51,233.8 427.67,235.5 427.82,232.8 427.98,232.0 428.14,235.0 428.30,234.0 428.46,233.7 428.61,231.6 428.77,233.2 428.93,233.8 429.09,232.1 429.25,231.3 429.41,230.9 429.56,230.7 429.72,231.6 429.88,232.7 430.04,234.5 430.20,234.2 430.35,232.5 430.51,231.5 430.67,232.3 430.83,232.4 430.99,234.1 431.14,233.0 431.30,231.6 431.46,234.1 431.62,234.1 431.78,232.1 431.93,235.5 432.09,233.7 432.25,234.3 432.41,232.9 432.57,233.5 432.73,231.5 432.88,234.6 433.04,232.8 433.20,232.1 433.36,233.3 433.52,233.7 433.67,232.1 433.83,234.1 433.99,231.9 434.15,234.0 434.31,231.5 434.46,233.7 434.62,232.1 434.78,233.8 434.94,233.1 435.10,233.1 858.54,233.1 858.70,231.0 858.86,233.1 859.02,233.9 859.18,233.1 865.50,233.1" stroke="#EDB120" stroke-width="1"/>
<polyline points="81.38,236.2 81.54,235.4 81.70,238.2 81.86,234.8 82.02,235.4 82.17,244.2 82.33,243.8 82.49,240.3 82.65,244.2 82.81,240.0 82.96,238.7 83.12,240.2 83.28,241.2 83.44,240.2 83.60,235.7 83.75,240.1 83.91,239.5 84.07,242.1 84.23,243.5 84.39,237.1 84.55,242.2 84.70,244.2 84.86,241.7 85.02,244.1 85.18,238.7 85.34,236.2 85.49,235.1 85.65,242.0 85.81,243.1 85.97,241.4 86.13,240.3 86.28,242.7 86.44,239.3 86.60,235.3 86.76,240.9 86.92,242.6 87.08,238.4 87.23,235.0 87.39,236.3 87.55,235.3 87.71,236.0 87.87,238.5 88.02,235.5 88.18,240.0 88.34,242.5 88.50,237.4 88.66,238.2 88.81,243.8 88.97,236.4 89.13,237.0 89.29,240.3 89.45,234.8 89.61,238.3 89.76,243.8 89.92,239.6 90.08,241.2 90.24,244.2 90.40,239.3 90.55,236.6 90.71,238.9 90.87,240.5 91.03,240.1 91.19,243.8 91.34,235.4 91.50,238.3 91.66,243.8 91.82,239.3 91.98,239.4 92.14,243.4 92.29,240.4 92.45,239.4 92.61,238.3 92.77,242.0 92.93,242.0 93.08,240.4 93.24,241.7 93.40,240.6 93.56,238.7 93.72,243.3 93.87,239.7 94.03,241.7 94.19,243.0 94.35,242.1 94.51,239.3 94.67,241.4 94.82,238.0 94.98,242.6 95.14,244.5 95.30,236.9 95.46,240.0 95.61,241.3 95.77,242.9 95.93,237.1 96.09,243.4 96.25,239.9 96.40,245.4 96.56,239.7 96.72,241.2 96.88,243.4 97.04,238.3 97.19,235.3 97.35,239.7 97.51,239.8 97.67,241.2 97.83,245.6 97.99,234.4 98.14,242.8 98.30,236.4 98.46,238.1 98.62,245.2 98.78,238.9 98.93,242.5 99.09,235.9 99.25,244.5 99.41,236.1 99.57,245.3 99.72,238.3 99.88,235.9 100.04,234.4 100.20,239.3 100.36,243.6 100.52,237.2 100.67,237.1 100.83,237.3 100.99,235.9 101.15,238.4 101.31,240.9 101.46,239.1 101.62,240.0 101.78,240.3 101.94,245.6 102.10,243.1 102.25,236.0 102.41,235.8 102.57,245.6 102.73,240.7 102.89,237.5 103.05,240.1 103.20,242.9 103.36,239.4 103.52,240.1 103.68,242.1 103.84,240.4 103.99,244.9 104.15,243.3 104.31,240.0 104.47,243.6 104.63,239.3 104.78,240.9 104.94,238.6 105.10,240.2 105.26,242.7 105.42,242.0 105.58,239.9 105.73,241.1 105.89,239.1 106.05,239.4 106.21,239.8 106.37,243.9 106.52,240.8 106.68,239.0 106.84,240.4 107.00,242.3 107.16,241.3 107.31,243.7 107.47,243.5 107.63,243.3 107.79,243.9 107.95,240.0 108.11,240.8 108.26,243.0 108.42,239.4 108.58,241.6 108.74,239.0 108.90,238.6 109.05,238.6 109.21,239.0 109.37,238.9 109.53,241.0 109.69,241.5 109.84,240.0 110.00,241.4 110.16,239.1 110.32,238.8 110.48,240.2 110.64,242.7 110.79,241.3 110.95,240.4 111.11,243.9 111.27,238.6 111.43,241.0 111.58,242.1 111.74,241.5 111.90,243.8 112.06,239.7 112.22,239.6 112.37,242.5 112.53,243.9 112.69,243.1 112.85,243.9 113.01,243.9 113.17,240.1 113.32,240.1 113.48,239.4 113.64,240.0 113.80,243.8 113.96,239.9 114.11,240.2 114.27,238.6 114.43,241.1 114.59,239.6 114.75,238.6 114.90,239.0 115.06,238.8 115.22,243.9 115.38,238.6 115.54,243.3 115.69,240.3 115.85,239.4 116.01,242.0 116.17,243.9 116.33,239.3 116.49,241.3 116.64,242.9 116.80,241.7 116.96,242.2 117.12,239.8 117.28,238.6 117.43,240.6 117.59,238.8 117.75,238.6 117.91,238.6 118.07,241.4 118.22,238.9 118.38,239.9 118.54,243.9 118.70,239.8 118.86,241.0 119.02,239.0 119.17,240.1 119.33,238.6 119.49,239.9 119.65,240.2 119.81,238.6 119.96,243.9 120.12,238.6 120.28,241.3 120.44,241.1 120.60,243.4 120.75,243.8 120.91,238.6 121.07,243.0 121.23,241.0 121.39,239.7 121.55,239.7 121.70,239.3 121.86,243.7 122.02,243.0 122.18,243.3 122.34,239.8 122.49,241.2 122.65,238.6 122.81,240.7 122.97,240.8 123.13,239.2 123.28,240.3 123.44,240.7 123.60,239.6 123.76,243.9 123.92,243.9 124.08,240.5 124.23,240.0 124.39,238.6 124.55,242.0 124.71,243.8 124.87,240.3 125.02,242.8 125.18,238.7 125.34,240.7 125.50,241.5 125.66,239.0 125.81,240.8 125.97,239.3 126.13,241.2 126.29,241.5 126.45,240.8 126.61,239.9 126.76,242.1 126.92,239.8 127.08,242.2 127.24,242.0 127.40,243.9 127.55,240.3 127.71,240.9 127.87,239.9 128.03,241.6 128.19,240.5 128.34,239.6 128.50,243.9 128.66,239.7 128.82,242.6 128.98,241.7 129.14,242.3 129.29,242.8 129.45,239.1 129.61,240.6 129.77,240.9 129.93,242.9 130.08,239.2 130.24,242.7 130.40,243.8 130.56,238.9 130.72,243.6 130.87,241.1 131.03,242.8 131.19,239.4 131.35,239.1 131.51,242.3 131.67,243.4 131.82,238.6 131.98,241.6 132.14,245.1 132.30,240.5 132.46,242.8 132.61,245.1 132.77,239.2 132.93,241.2 133.09,245.1 133.25,238.5 133.40,237.8 133.56,240.7 133.72,245.1 133.88,235.7 134.04,241.9 134.19,237.9 134.35,244.3 134.51,235.8 134.67,239.5 134.83,237.4 134.99,242.5 135.14,237.4 135.30,238.4 135.46,237.7 135.62,242.8 135.78,244.6 135.93,237.2 136.09,239.5 136.25,244.6 136.41,239.2 136.57,244.8 136.72,235.9 136.88,245.1 137.04,238.5 137.20,236.2 137.36,237.3 137.52,240.5 137.67,238.4 137.83,243.5 137.99,239.7 138.15,236.2 138.31,245.1 138.46,244.7 138.62,238.9 138.78,243.3 138.94,235.9 139.10,239.0 139.25,237.3 139.41,244.1 139.57,245.1 139.73,239.3 139.89,239.9 140.05,236.0 140.20,236.1 140.36,238.9 140.52,244.6 140.68,245.1 140.84,242.4 140.99,243.2 141.15,236.1 141.31,236.5 141.47,239.9 141.63,243.0 141.78,243.3 141.94,240.2 142.10,245.1 142.26,241.3 142.42,238.5 142.58,243.0 142.73,235.4 142.89,239.4 143.05,241.8 143.21,240.9 143.37,241.2 143.52,239.3 143.68,240.6 143.84,239.0 144.00,238.8 144.16,241.6 144.31,239.5 144.47,240.6 144.63,243.5 144.79,243.4 144.95,239.3 145.11,241.1 145.26,239.1 145.42,244.0 145.58,244.0 145.74,239.5 145.90,239.3 146.05,240.9 146.21,239.1 146.37,245.2 146.53,237.5 146.69,239.2 146.84,242.9 147.00,241.2 147.16,236.9 147.32,244.6 147.48,237.3 147.64,238.0 147.79,245.8 147.95,245.4 148.11,244.8 148.27,239.3 148.43,245.6 148.58,242.4 148.74,238.9 148.90,238.2 149.06,239.3 149.22,241.0 164.87,241.0 165.03,240.5 244.88,240.5 245.04,242.4 245.20,239.8 245.35,242.5 245.51,241.0 245.67,242.9 245.83,240.0 245.99,241.3 246.14,242.3 246.30,239.8 246.46,243.7 246.62,241.4 246.78,243.8 246.93,243.8 247.09,241.4 247.25,241.5 247.41,240.2 247.57,243.8 247.73,239.8 247.88,242.3 248.04,240.1 248.20,241.2 248.36,240.3 248.52,241.8 248.67,240.2 248.83,243.0 248.99,240.5 249.15,243.5 249.31,241.7 249.46,243.8 249.62,242.5 249.78,242.3 249.94,242.2 250.10,240.5 250.26,242.0 250.41,239.8 250.57,240.7 250.73,243.3 250.89,239.8 251.05,241.3 251.20,243.1 251.36,242.3 251.52,240.7 251.68,241.2 251.84,240.5 251.99,243.8 252.15,242.2 252.31,243.1 252.47,241.4 252.63,243.8 252.78,243.8 252.94,239.9 253.10,243.4 253.26,242.6 253.42,243.8 253.58,239.9 253.73,239.8 253.89,241.7 254.05,243.4 254.21,242.9 254.37,240.0 254.52,242.8 254.68,243.3 254.84,243.0 255.00,241.8 255.16,240.6 255.31,241.8 255.47,239.9 255.63,240.4 255.79,242.5 255.95,240.4 256.11,240.7 256.26,241.7 256.42,242.1 256.58,241.6 256.74,240.6 256.90,241.6 257.05,242.0 257.21,242.3 257.37,241.1 257.53,241.3 257.69,241.9 257.84,242.4 258.00,242.1 258.16,242.2 258.32,241.9 258.48,241.0 258.64,241.2 258.79,240.5 258.95,241.6 259.11,240.4 259.27,240.7 259.43,240.9 259.58,241.6 259.74,241.6 259.90,240.7 260.06,240.9 260.22,240.6 260.37,242.1 260.53,241.2 260.69,240.5 260.85,241.5 261.01,241.7 261.17,242.2 261.32,240.9 261.48,240.5 261.64,241.2 261.80,240.6 261.96,240.5 262.11,242.2 262.27,240.8 262.43,241.4 262.59,242.0 262.75,241.0 262.90,240.5 263.06,241.9 263.22,240.5 263.38,241.9 263.54,241.9 263.70,240.9 263.85,240.9 264.01,242.4 264.17,242.2 264.33,240.5 264.49,241.7 264.64,242.2 264.80,241.0 264.96,242.1 265.12,240.4 265.28,242.0 265.43,240.8 265.59,240.8 265.75,241.6 265.91,242.1 266.07,242.3 266.23,241.5 266.38,241.5 266.54,240.4 266.70,241.5 266.86,240.9 267.02,240.6 267.17,240.7 267.33,240.4 267.49,242.3 267.65,240.5 267.81,241.7 267.96,240.4 268.12,242.4 268.28,241.5 268.44,242.1 268.60,241.8 268.76,240.9 268.91,240.5 269.07,242.2 269.23,240.6 269.39,241.7 269.55,240.7 269.70,241.7 269.86,241.1 270.02,241.1 270.18,240.5 270.34,242.2 270.49,241.6 270.65,241.0 270.81,241.9 270.97,240.4 271.13,240.5 271.29,241.4 271.44,241.7 271.60,239.0 271.76,239.2 271.92,239.3 272.08,241.3 272.23,240.6 272.39,240.4 272.55,239.5 272.71,241.6 272.87,239.5 273.02,241.1 273.18,241.7 273.34,239.3 273.50,239.3 273.66,241.5 273.81,240.2 273.97,240.1 274.13,240.2 274.29,239.5 274.45,240.8 274.61,239.4 274.76,240.9 274.92,239.1 275.08,240.5 275.24,240.3 275.40,239.9 275.55,240.9 275.71,239.7 275.87,240.8 276.03,240.4 276.19,241.1 276.34,240.7 276.50,241.7 276.66,240.7 276.82,239.7 276.98,239.7 277.14,241.7 277.29,240.8 277.45,239.5 277.61,239.9 277.77,239.8 277.93,241.5 278.08,241.4 278.24,239.1 278.40,240.2 278.56,241.7 278.72,239.1 278.87,241.0 279.03,239.0 279.19,240.6 279.35,240.2 279.51,241.0 279.67,241.1 279.82,241.4 279.98,240.8 280.14,239.9 280.30,239.3 280.46,241.2 280.61,240.7 280.77,240.2 280.93,240.7 281.09,240.9 281.25,239.5 281.40,241.2 281.56,240.4 281.72,239.2 281.88,239.5 282.04,241.6 282.20,239.3 282.35,240.5 282.51,240.4 282.67,241.3 282.83,240.2 282.99,239.6 283.14,240.2 283.30,239.1 283.46,240.1 283.62,242.8 283.78,238.6 283.93,241.6 284.09,239.7 284.25,241.7 284.41,240.8 284.57,242.0 284.73,239.5 284.88,241.9 285.04,241.3 285.20,241.0 285.36,242.7 285.52,241.3 285.67,242.1 285.83,239.8 285.99,239.1 286.15,240.1 286.31,239.7 286.46,239.6 286.62,239.3 286.78,242.8 286.94,239.9 287.10,241.2 287.26,242.8 287.41,240.2 287.57,242.8 287.73,242.1 287.89,238.6 288.05,238.6 288.20,239.0 288.36,239.6 288.52,240.0 288.68,242.4 288.84,239.3 288.99,241.2 289.15,241.4 289.31,241.9 289.47,239.4 289.63,240.8 289.79,240.4 289.94,240.9 290.10,239.6 290.26,240.7 290.42,242.8 290.58,239.6 290.73,241.1 290.89,239.2 291.05,241.5 291.21,239.8 291.37,240.4 291.52,241.5 291.68,240.1 291.84,238.6 292.00,242.8 292.16,242.8 292.31,238.7 292.47,241.2 292.63,242.3 292.79,240.6 292.95,241.9 293.11,240.4 293.26,240.9 293.42,239.8 293.58,240.3 293.74,239.7 293.90,242.7 294.05,242.0 294.21,239.9 294.37,241.1 294.53,241.9 294.69,242.8 295.00,242.8 295.16,241.9 295.32,241.2 295.48,241.2 295.64,241.1 295.79,239.5 295.95,240.5 296.11,239.0 296.27,238.7 296.43,242.5 296.58,240.1 296.74,241.9 296.90,239.7 297.06,241.3 297.22,241.4 297.37,244.2 297.53,238.9 297.69,241.3 297.85,241.2 298.01,244.6 298.17,242.6 298.32,243.3 298.48,239.4 298.64,244.0 298.80,241.3 298.96,238.9 299.11,240.2 299.27,241.6 299.43,242.1 299.59,243.1 299.75,241.0 299.90,242.8 300.06,242.3 300.22,241.2 300.38,241.8 300.54,243.2 300.70,238.1 300.85,238.1 301.01,241.5 301.17,242.7 301.33,239.9 301.49,242.2 301.64,239.1 301.80,238.8 301.96,239.1 302.12,240.8 302.28,240.6 302.43,242.3 302.59,239.7 302.75,241.7 302.91,241.4 303.07,242.1 303.23,238.1 303.38,240.5 303.54,240.2 303.70,241.5 303.86,242.6 304.02,238.2 304.17,240.5 304.33,242.6 304.49,238.4 304.65,242.6 304.81,241.3 304.96,242.8 305.12,241.9 305.28,240.1 305.44,243.6 305.60,242.3 305.76,239.4 305.91,241.9 306.07,239.3 306.23,242.3 306.39,240.7 306.55,243.6 306.70,241.3 306.86,243.0 307.02,240.8 307.18,239.2 307.34,239.1 307.49,240.1 307.65,240.4 307.81,239.0 307.97,243.6 308.13,241.6 308.29,239.0 308.44,240.0 308.60,238.3 308.76,243.6 308.92,243.2 309.08,238.7 309.23,241.4 309.39,238.9 309.55,240.0 309.71,240.2 309.87,238.1 310.02,240.4 310.18,241.8 310.34,242.1 310.50,239.2 310.66,239.7 310.82,242.1 310.97,240.1 311.13,241.2 311.29,241.9 311.45,239.1 311.61,239.0 311.76,239.7 311.92,241.2 312.08,240.4 312.24,239.9 312.40,238.9 312.55,240.8 312.71,239.3 312.87,239.7 313.03,240.4 313.19,239.7 313.34,241.1 313.50,238.9 313.66,241.5 313.82,242.1 313.98,240.3 314.14,242.1 314.29,240.4 314.45,241.5 314.61,240.9 314.77,239.6 314.93,242.1 315.08,241.6 315.24,240.2 315.40,239.8 315.56,240.0 315.72,240.5 315.87,241.7 316.03,242.0 316.19,238.9 316.35,239.3 316.51,242.0 316.67,239.8 316.82,239.7 316.98,240.2 317.14,241.5 317.30,239.4 317.46,240.3 317.61,240.5 317.77,241.4 317.93,239.8 318.09,239.1 318.25,239.8 318.40,241.6 318.56,239.7 318.72,240.8 318.88,241.7 319.04,241.3 319.20,239.4 319.35,240.9 319.51,239.9 319.67,242.1 319.83,240.6 319.99,239.8 320.14,241.9 320.30,242.1 320.46,241.7 320.62,239.5 320.78,240.1 320.93,240.1 321.09,239.0 321.25,240.3 321.41,239.3 321.57,241.5 321.73,239.9 321.88,240.1 322.04,239.1 322.20,241.9 322.36,240.5 322.52,240.6 322.67,238.9 322.83,239.3 322.99,241.5 323.15,238.9 323.31,239.8 323.46,240.9 323.62,239.7 323.78,240.0 323.94,238.9 324.10,240.5 324.26,239.8 324.41,240.2 324.57,240.8 324.73,239.4 324.89,241.3 325.05,242.2 325.20,239.9 325.36,242.2 325.52,240.0 325.68,241.9 325.84,239.2 325.99,240.2 326.15,242.1 326.31,242.1 326.47,238.2 326.63,242.8 326.79,239.2 326.94,241.2 327.10,240.7 327.26,243.1 327.42,239.1 327.58,240.0 327.73,240.3 327.89,237.9 328.05,239.3 328.21,239.3 328.37,242.7 328.52,239.2 328.68,240.2 328.84,239.4 329.00,241.3 329.16,241.0 329.32,240.6 329.47,240.3 329.63,238.7 329.79,238.6 329.95,240.0 330.11,239.2 330.26,243.1 330.42,240.9 330.58,239.0 330.74,240.3 330.90,241.1 331.05,239.5 331.21,239.1 331.37,239.9 331.53,238.0 331.69,242.3 331.85,240.8 332.00,239.4 332.16,239.5 332.32,238.8 332.48,243.1 332.64,243.1 332.79,241.8 332.95,243.0 333.11,242.7 333.27,241.4 333.43,239.0 333.58,239.4 333.74,238.4 333.90,242.7 334.06,239.3 334.22,241.2 334.37,240.1 334.53,240.0 334.69,238.5 334.85,243.0 335.01,242.3 335.17,241.1 335.32,242.3 335.48,239.4 335.64,239.8 335.80,241.0 335.96,238.0 336.11,243.0 336.27,239.5 336.43,242.0 336.59,239.9 336.75,242.1 336.90,242.9 337.06,239.2 337.22,242.9 337.38,242.8 337.54,243.1 337.70,242.6 337.85,240.7 338.01,240.6 338.17,241.4 338.33,239.8 338.49,239.7 338.64,241.4 338.80,238.5 338.96,240.0 339.12,240.9 339.28,242.9 339.43,240.2 339.59,243.0 339.75,240.7 339.91,238.8 340.07,242.9 340.23,240.6 340.38,242.5 340.54,242.1 340.70,242.5 340.86,238.7 341.02,239.8 341.17,237.4 341.33,240.7 341.49,238.6 341.65,240.8 341.81,243.6 341.96,235.9 342.12,236.7 342.28,235.9 342.44,240.2 342.60,240.9 342.76,243.5 342.91,239.1 343.07,237.1 343.23,236.8 343.39,237.2 343.55,242.2 343.70,242.1 343.86,235.9 344.02,237.0 344.18,238.0 344.34,235.9 344.49,236.4 344.65,240.7 344.81,235.9 344.97,243.2 345.13,240.7 345.29,236.3 345.44,242.4 345.60,242.8 345.76,238.3 345.92,243.2 346.08,243.2 346.23,238.9 346.39,237.6 346.55,242.6 346.71,242.0 346.87,237.3 347.02,237.4 347.18,238.2 347.34,236.8 347.50,238.9 347.66,236.4 347.82,242.2 347.97,237.8 348.13,238.1 348.29,236.2 348.45,238.5 348.61,241.3 348.76,243.6 348.92,240.2 349.08,242.0 349.24,238.7 349.40,239.0 349.55,240.4 349.71,239.6 349.87,242.5 350.03,243.1 350.19,240.5 350.35,243.5 350.50,239.0 350.66,236.9 350.82,241.1 350.98,243.6 351.14,236.2 351.29,237.1 351.45,235.9 351.61,237.7 351.77,242.7 351.93,243.6 352.08,237.4 352.24,236.6 352.40,242.2 352.56,238.7 352.72,239.5 352.87,240.7 353.03,243.1 353.19,238.7 353.35,241.2 353.51,236.1 353.67,239.5 353.82,239.0 353.98,236.7 354.14,238.0 354.30,237.6 354.46,239.0 354.61,239.2 354.77,237.1 354.93,240.1 355.09,243.1 355.25,237.7 355.40,239.9 355.56,241.0 355.72,243.1 355.88,241.8 356.04,242.8 356.20,240.4 356.35,243.4 356.51,236.2 356.67,241.9 356.83,242.9 356.99,241.6 357.14,240.6 357.30,240.0 357.46,243.2 357.62,238.5 357.78,241.2 357.93,240.7 358.09,241.6 358.25,241.6 358.41,242.2 358.57,238.6 358.73,242.5 358.88,238.5 359.04,242.2 359.20,239.0 359.36,238.5 359.52,238.0 359.67,238.3 359.83,240.4 359.99,241.8 360.15,243.6 360.31,241.7 360.46,241.8 360.62,238.9 360.78,238.2 360.94,243.2 361.10,238.4 361.26,242.6 361.41,238.7 361.57,237.5 361.73,237.7 361.89,239.3 362.05,239.3 362.20,238.4 362.36,240.9 362.52,240.9 362.68,243.6 362.84,238.0 362.99,243.4 363.15,238.1 363.31,240.1 363.47,240.8 363.63,237.4 363.79,243.2 363.94,239.0 364.10,238.3 364.26,243.6 364.42,238.6 364.58,242.6 364.73,238.5 364.89,242.5 365.05,239.4 365.21,242.5 365.37,239.7 365.52,239.7 365.68,238.9 365.84,243.6 366.00,240.5 366.16,238.3 366.32,240.5 366.47,237.6 366.63,242.4 366.79,237.6 366.95,238.6 367.11,237.7 367.26,241.7 367.42,238.3 367.58,237.6 367.74,239.2 367.90,240.9 368.05,242.1 368.21,239.0 368.37,240.4 368.53,238.5 368.69,242.6 368.85,240.2 369.00,238.3 369.16,240.6 369.32,237.6 369.48,240.8 369.64,239.7 369.79,240.8 369.95,241.9 370.11,240.7 370.27,238.7 370.43,241.0 370.58,240.4 370.74,242.3 370.90,238.8 371.06,238.9 371.22,242.4 371.38,241.3 371.53,241.7 371.69,238.5 371.85,241.1 372.01,239.8 372.17,241.0 372.32,242.1 372.48,241.8 372.64,241.6 372.80,240.1 372.96,241.7 373.11,240.7 373.27,240.1 373.43,241.0 373.59,242.4 373.75,239.9 373.90,242.6 374.06,238.9 374.22,238.9 374.38,239.6 374.54,239.4 374.70,240.0 374.85,242.7 375.01,240.8 375.17,243.1 375.33,239.0 375.49,240.2 375.64,241.6 375.80,241.4 375.96,240.8 376.12,240.6 376.28,239.1 376.43,240.2 376.59,242.5 376.75,244.1 376.91,238.9 377.07,239.7 377.23,243.4 377.38,243.2 377.54,240.2 377.70,242.8 377.86,241.2 378.02,240.5 384.97,240.5 385.13,239.5 391.93,239.5 392.09,231.4 392.25,231.6 392.40,231.8 392.56,234.7 392.72,235.7 392.88,235.0 393.04,232.6 393.20,234.1 393.35,234.1 393.51,232.1 393.67,232.5 393.83,235.2 393.99,233.8 394.14,233.1 394.30,233.9 394.46,232.7 394.62,234.6 394.78,235.2 394.93,233.4 395.09,236.6 395.25,234.4 395.41,235.0 395.57,236.1 395.73,231.4 395.88,234.7 396.04,232.9 396.20,235.9 396.36,234.9 396.52,235.3 396.67,234.0 396.83,233.2 396.99,233.5 397.15,236.6 397.31,235.4 397.46,236.0 397.62,236.5 397.78,232.5 397.94,234.9 398.10,233.5 398.26,236.2 398.41,232.2 398.57,232.7 398.73,234.8 398.89,231.8 399.05,236.2 399.20,233.0 399.36,233.8 399.52,235.0 399.68,236.2 399.84,233.1 399.99,236.0 400.15,235.3 400.31,232.7 400.47,231.4 400.63,234.5 400.79,234.8 400.94,235.2 401.10,234.5 401.26,236.6 401.42,236.6 401.58,234.7 401.73,232.5 401.89,235.3 402.05,232.7 402.21,232.5 402.37,234.6 402.52,234.6 402.68,232.7 402.84,234.2 403.00,234.6 403.16,231.6 403.32,233.7 403.47,231.7 403.63,231.9 403.79,231.7 403.95,232.8 404.11,233.3 404.26,233.5 404.42,232.5 404.58,232.2 404.74,233.8 404.90,232.4 405.05,234.5 405.21,232.3 405.37,234.4 405.53,231.5 405.69,233.5 405.85,232.6 406.00,232.2 406.16,231.7 406.32,231.4 406.48,232.1 406.64,232.3 406.79,233.7 406.95,234.1 407.11,233.9 407.27,232.5 407.43,232.8 407.58,232.1 407.74,234.2 407.90,232.1 408.06,231.5 408.22,231.5 408.38,234.3 408.53,232.5 408.69,232.6 408.85,232.6 409.01,234.1 409.17,231.4 409.32,232.2 409.48,233.8 409.64,232.4 409.80,232.1 409.96,231.9 410.11,234.1 410.27,233.8 410.43,232.3 410.59,233.0 410.75,232.0 410.90,233.3 411.06,233.2 411.22,232.1 411.38,232.6 411.54,234.1 411.70,234.1 411.85,232.4 412.01,231.4 412.17,231.9 412.33,233.0 412.49,233.8 412.64,232.7 412.80,233.4 412.96,232.7 413.12,234.2 413.28,232.1 413.43,231.5 413.59,233.3 413.75,233.6 413.91,231.6 414.07,231.7 414.23,234.4 414.38,233.1 414.54,231.4 414.70,233.7 414.86,231.8 415.02,233.0 415.17,232.5 415.33,234.4 415.49,233.7 415.65,232.0 415.81,231.7 415.96,231.4 416.12,232.6 416.28,231.4 416.44,233.2 416.60,234.5 416.76,233.7 416.91,232.4 417.07,234.5 417.23,232.6 417.39,231.9 417.55,231.5 417.70,234.3 417.86,233.3 418.02,232.2 418.18,231.8 418.34,233.9 418.49,231.6 418.65,232.5 418.81,233.2 418.97,234.5 419.13,234.6 419.29,234.5 419.44,233.4 419.60,232.6 419.76,232.7 419.92,233.3 420.08,232.4 420.23,233.1 420.39,233.3 420.55,234.3 420.71,233.7 420.87,232.9 421.02,231.9 421.18,233.1 421.34,233.1 421.50,232.2 421.66,234.0 421.82,233.4 421.97,234.2 422.13,231.6 422.29,234.0 422.45,231.8 422.61,232.2 422.76,232.6 422.92,233.1 423.08,231.7 423.24,234.5 423.40,232.8 423.55,233.9 423.71,231.9 423.87,232.6 424.03,232.2 424.19,232.5 424.35,231.5 424.50,233.2 424.66,231.4 424.82,234.3 424.98,232.3 425.14,233.1 425.29,231.7 425.45,234.4 425.61,233.9 425.77,233.7 425.93,231.6 426.08,234.5 426.24,233.3 426.40,232.2 426.56,231.9 426.72,234.5 426.88,233.2 427.03,231.4 427.19,234.6 427.35,233.0 427.51,233.8 427.67,234.6 427.82,232.8 427.98,232.0 428.14,234.6 428.30,234.0 428.46,233.7 428.61,231.6 428.77,233.2 428.93,233.8 429.09,232.1 429.25,231.4 429.56,231.4 429.72,231.6 429.88,232.7 430.04,234.5 430.20,234.2 430.35,232.5 430.51,231.5 430.67,232.3 430.83,232.4 430.99,234.1 431.14,233.0 431.30,231.6 431.46,234.1 431.62,234.1 431.78,232.1 431.93,234.6 432.09,233.7 432.25,234.3 432.41,232.9 432.57,233.5 432.73,231.5 432.88,234.6 433.04,232.8 433.20,232.1 433.36,233.3 433.52,233.7 433.67,232.1 433.83,234.1 433.99,231.9 434.15,234.0 434.31,231.5 434.46,233.7 434.62,232.1 434.78,233.8 434.94,233.1 435.10,233.1 435.57,233.1" stroke="#EDB120" stroke-width="4.9"/>
<polyline points="435.41,233.1 865.50,233.1" stroke="#EDB120" stroke-width="4.2"/>
<g fill="#EDB120" stroke="none"><circle cx="75.06" cy="119.5" r="1.7"/><circle cx="75.22" cy="123.4" r="1.7"/><circle cx="75.37" cy="128.7" r="1.7"/><circle cx="75.53" cy="135.9" r="1.7"/><circle cx="75.69" cy="144.4" r="1.7"/><circle cx="75.85" cy="155.6" r="1.7"/><circle cx="76.01" cy="170.7" r="1.7"/><circle cx="76.16" cy="187.7" r="1.7"/><circle cx="76.32" cy="208.7" r="1.7"/><circle cx="76.48" cy="232.3" r="1.7"/><circle cx="76.64" cy="257.3" r="1.7"/><circle cx="76.80" cy="283.5" r="1.7"/><circle cx="76.96" cy="305.8" r="1.7"/><circle cx="77.11" cy="318.9" r="1.7"/><circle cx="77.27" cy="315.0" r="1.7"/><circle cx="77.43" cy="300.6" r="1.7"/><circle cx="77.59" cy="283.5" r="1.7"/><circle cx="77.75" cy="270.4" r="1.7"/><circle cx="77.90" cy="280.9" r="1.7"/><circle cx="78.06" cy="261.2" r="1.7"/><circle cx="78.22" cy="248.1" r="1.7"/><circle cx="78.38" cy="266.4" r="1.7"/><circle cx="78.54" cy="237.6" r="1.7"/><circle cx="78.69" cy="224.5" r="1.7"/><circle cx="78.85" cy="211.3" r="1.7"/><circle cx="79.01" cy="208.7" r="1.7"/><circle cx="79.17" cy="219.2" r="1.7"/><circle cx="79.33" cy="210.0" r="1.7"/><circle cx="79.49" cy="237.6" r="1.7"/><circle cx="79.64" cy="263.8" r="1.7"/><circle cx="79.80" cy="270.4" r="1.7"/><circle cx="79.96" cy="227.1" r="1.7"/><circle cx="80.12" cy="211.3" r="1.7"/><circle cx="80.28" cy="244.1" r="1.7"/><circle cx="80.43" cy="266.4" r="1.7"/><circle cx="80.59" cy="235.0" r="1.7"/><circle cx="80.75" cy="219.2" r="1.7"/><circle cx="80.91" cy="250.7" r="1.7"/><circle cx="81.07" cy="233.6" r="1.7"/><circle cx="81.22" cy="242.8" r="1.7"/><circle cx="81.86" cy="234.7" r="2.1"/><circle cx="82.17" cy="244.3" r="2.1"/><circle cx="82.65" cy="244.3" r="2.1"/><circle cx="84.70" cy="244.7" r="2.1"/><circle cx="90.24" cy="244.6" r="2.1"/><circle cx="97.83" cy="246.3" r="2.1"/><circle cx="97.99" cy="233.5" r="2.1"/><circle cx="100.04" cy="233.9" r="2.1"/><circle cx="101.94" cy="246.3" r="2.1"/><circle cx="102.57" cy="246.3" r="2.1"/><circle cx="104.94" cy="238.3" r="2.1"/><circle cx="107.79" cy="244.0" r="2.1"/><circle cx="108.90" cy="238.3" r="2.1"/><circle cx="109.05" cy="238.2" r="2.1"/><circle cx="111.11" cy="244.0" r="2.1"/><circle cx="111.27" cy="238.2" r="2.1"/><circle cx="112.85" cy="244.2" r="2.1"/><circle cx="113.01" cy="244.5" r="2.1"/><circle cx="115.22" cy="244.3" r="2.1"/><circle cx="115.38" cy="238.2" r="2.1"/><circle cx="116.17" cy="244.4" r="2.1"/><circle cx="117.28" cy="238.2" r="2.1"/><circle cx="117.75" cy="238.3" r="2.1"/><circle cx="117.91" cy="238.1" r="2.1"/><circle cx="118.54" cy="244.1" r="2.1"/><circle cx="119.33" cy="238.5" r="2.1"/><circle cx="119.96" cy="244.5" r="2.1"/><circle cx="120.12" cy="238.1" r="2.1"/><circle cx="122.65" cy="238.0" r="2.1"/><circle cx="123.76" cy="244.1" r="2.1"/><circle cx="123.92" cy="244.5" r="2.1"/><circle cx="124.39" cy="238.5" r="2.1"/><circle cx="127.40" cy="244.3" r="2.1"/><circle cx="128.50" cy="244.2" r="2.1"/><circle cx="131.82" cy="238.5" r="2.1"/><circle cx="132.14" cy="246.0" r="2.1"/><circle cx="132.61" cy="245.6" r="2.1"/><circle cx="133.09" cy="246.0" r="2.1"/><circle cx="133.72" cy="245.8" r="2.1"/><circle cx="136.88" cy="245.5" r="2.1"/><circle cx="138.31" cy="246.0" r="2.1"/><circle cx="139.57" cy="245.3" r="2.1"/><circle cx="140.68" cy="246.0" r="2.1"/><circle cx="142.10" cy="245.9" r="2.1"/><circle cx="142.73" cy="235.1" r="2.1"/><circle cx="147.16" cy="236.5" r="2.1"/><circle cx="246.30" cy="239.2" r="2.1"/><circle cx="246.78" cy="244.3" r="2.1"/><circle cx="246.93" cy="244.6" r="2.1"/><circle cx="247.57" cy="244.3" r="2.1"/><circle cx="249.46" cy="243.9" r="2.1"/><circle cx="250.41" cy="239.3" r="2.1"/><circle cx="250.89" cy="238.9" r="2.1"/><circle cx="251.99" cy="244.4" r="2.1"/><circle cx="252.63" cy="244.3" r="2.1"/><circle cx="252.78" cy="244.4" r="2.1"/><circle cx="253.42" cy="244.6" r="2.1"/><circle cx="253.73" cy="239.5" r="2.1"/><circle cx="257.84" cy="242.7" r="2.1"/><circle cx="259.11" cy="240.4" r="2.1"/><circle cx="264.01" cy="243.2" r="2.1"/><circle cx="265.12" cy="240.3" r="2.1"/><circle cx="266.54" cy="240.0" r="2.1"/><circle cx="267.33" cy="239.8" r="2.1"/><circle cx="267.96" cy="239.7" r="2.1"/><circle cx="268.12" cy="242.5" r="2.1"/><circle cx="270.97" cy="240.1" r="2.1"/><circle cx="271.44" cy="241.9" r="2.1"/><circle cx="271.60" cy="238.8" r="2.1"/><circle cx="279.03" cy="238.1" r="2.1"/><circle cx="283.62" cy="243.3" r="2.1"/><circle cx="283.78" cy="238.0" r="2.1"/><circle cx="286.78" cy="243.3" r="2.1"/><circle cx="287.26" cy="243.0" r="2.1"/><circle cx="287.57" cy="243.9" r="2.1"/><circle cx="288.05" cy="237.7" r="2.1"/><circle cx="290.42" cy="244.0" r="2.1"/><circle cx="292.00" cy="243.9" r="2.1"/><circle cx="292.16" cy="243.5" r="2.1"/><circle cx="294.69" cy="243.6" r="2.1"/><circle cx="294.84" cy="243.0" r="2.1"/><circle cx="295.00" cy="243.6" r="2.1"/><circle cx="297.53" cy="237.3" r="2.1"/><circle cx="298.01" cy="245.7" r="2.1"/><circle cx="298.96" cy="237.0" r="2.1"/><circle cx="300.70" cy="238.1" r="2.1"/><circle cx="300.85" cy="237.6" r="2.1"/><circle cx="303.23" cy="237.2" r="2.1"/><circle cx="305.44" cy="244.8" r="2.1"/><circle cx="306.55" cy="244.8" r="2.1"/><circle cx="307.97" cy="244.2" r="2.1"/><circle cx="308.76" cy="244.5" r="2.1"/><circle cx="309.87" cy="237.3" r="2.1"/><circle cx="310.34" cy="243.0" r="2.1"/><circle cx="310.82" cy="242.2" r="2.1"/><circle cx="312.40" cy="238.3" r="2.1"/><circle cx="313.50" cy="238.2" r="2.1"/><circle cx="313.82" cy="242.9" r="2.1"/><circle cx="314.14" cy="242.9" r="2.1"/><circle cx="314.93" cy="242.6" r="2.1"/><circle cx="316.19" cy="238.4" r="2.1"/><circle cx="319.67" cy="242.9" r="2.1"/><circle cx="320.30" cy="243.0" r="2.1"/><circle cx="322.67" cy="238.7" r="2.1"/><circle cx="323.15" cy="238.0" r="2.1"/><circle cx="323.94" cy="238.9" r="2.1"/><circle cx="327.26" cy="243.4" r="2.1"/><circle cx="327.89" cy="237.9" r="2.1"/><circle cx="330.26" cy="244.3" r="2.1"/><circle cx="332.48" cy="243.7" r="2.1"/><circle cx="332.64" cy="244.3" r="2.1"/><circle cx="337.54" cy="243.9" r="2.1"/><circle cx="341.81" cy="243.6" r="2.1"/><circle cx="341.96" cy="231.8" r="2.1"/><circle cx="342.28" cy="235.1" r="2.1"/><circle cx="343.86" cy="232.9" r="2.1"/><circle cx="344.34" cy="232.1" r="2.1"/><circle cx="344.81" cy="231.9" r="2.1"/><circle cx="348.76" cy="246.0" r="2.1"/><circle cx="350.98" cy="246.9" r="2.1"/><circle cx="351.45" cy="232.8" r="2.1"/><circle cx="351.93" cy="247.2" r="2.1"/><circle cx="360.15" cy="243.8" r="2.1"/><circle cx="362.68" cy="245.5" r="2.1"/><circle cx="363.63" cy="236.2" r="2.1"/><circle cx="364.26" cy="245.2" r="2.1"/><circle cx="365.84" cy="245.4" r="2.1"/><circle cx="366.47" cy="237.3" r="2.1"/><circle cx="366.79" cy="236.3" r="2.1"/><circle cx="367.58" cy="236.8" r="2.1"/><circle cx="368.69" cy="243.3" r="2.1"/><circle cx="369.32" cy="236.5" r="2.1"/><circle cx="373.90" cy="243.7" r="2.1"/><circle cx="374.06" cy="238.8" r="2.1"/><circle cx="374.22" cy="237.8" r="2.1"/><circle cx="376.75" cy="244.3" r="2.1"/><circle cx="376.91" cy="238.8" r="2.1"/><circle cx="392.09" cy="230.7" r="2.1"/><circle cx="395.09" cy="237.1" r="2.1"/><circle cx="395.73" cy="230.3" r="2.1"/><circle cx="397.15" cy="237.6" r="2.1"/><circle cx="400.47" cy="230.9" r="2.1"/><circle cx="401.26" cy="237.6" r="2.1"/><circle cx="401.42" cy="237.4" r="2.1"/><circle cx="402.37" cy="235.3" r="2.1"/><circle cx="402.52" cy="235.3" r="2.1"/><circle cx="403.00" cy="235.1" r="2.1"/><circle cx="406.32" cy="231.3" r="2.1"/><circle cx="409.17" cy="231.2" r="2.1"/><circle cx="412.01" cy="231.3" r="2.1"/><circle cx="414.54" cy="230.8" r="2.1"/><circle cx="415.96" cy="231.0" r="2.1"/><circle cx="416.28" cy="230.8" r="2.1"/><circle cx="419.13" cy="235.1" r="2.1"/><circle cx="424.66" cy="231.1" r="2.1"/><circle cx="427.03" cy="231.1" r="2.1"/><circle cx="427.19" cy="234.9" r="2.1"/><circle cx="427.67" cy="235.5" r="2.1"/><circle cx="428.14" cy="235.0" r="2.1"/><circle cx="429.25" cy="231.3" r="2.1"/><circle cx="429.41" cy="230.9" r="2.1"/><circle cx="429.56" cy="230.7" r="2.1"/><circle cx="431.93" cy="235.5" r="2.1"/><circle cx="432.88" cy="234.6" r="2.1"/><circle cx="103.36" cy="252.0" r="2.1"/><circle cx="103.52" cy="251.5" r="2.1"/><circle cx="858.70" cy="231.0" r="2.1"/><circle cx="859.02" cy="233.9" r="2.1"/><circle cx="392.72" cy="225.5" r="2.1"/><circle cx="392.88" cy="226.5" r="2.1"/><circle cx="399.68" cy="225.5" r="2.1"/><circle cx="399.84" cy="226.5" r="2.1"/><circle cx="393.20" cy="239.0" r="2.1"/><circle cx="400.15" cy="239.0" r="2.1"/></g>
<path d="M84.80 725.50L94.20 725.50M86.34 722.34L92.66 728.66M89.50 720.80L89.50 730.20M92.66 722.34L86.34 728.66M100.80 725.50L110.20 725.50M102.34 722.34L108.66 728.66M105.50 720.80L105.50 730.20M108.66 722.34L102.34 728.66M116.80 725.50L126.20 725.50M118.34 722.34L124.66 728.66M121.50 720.80L121.50 730.20M124.66 722.34L118.34 728.66M132.80 725.50L142.20 725.50M134.34 722.34L140.66 728.66M137.50 720.80L137.50 730.20M140.66 722.34L134.34 728.66M147.80 725.50L157.20 725.50M149.34 722.34L155.66 728.66M152.50 720.80L152.50 730.20M155.66 722.34L149.34 728.66M163.80 725.50L173.20 725.50M165.34 722.34L171.66 728.66M168.50 720.80L168.50 730.20M171.66 722.34L165.34 728.66M179.80 725.50L189.20 725.50M181.34 722.34L187.66 728.66M184.50 720.80L184.50 730.20M187.66 722.34L181.34 728.66M195.80 725.50L205.20 725.50M197.34 722.34L203.66 728.66M200.50 720.80L200.50 730.20M203.66 722.34L197.34 728.66M211.80 725.50L221.20 725.50M213.34 722.34L219.66 728.66M216.50 720.80L216.50 730.20M219.66 722.34L213.34 728.66M227.80 725.50L237.20 725.50M229.34 722.34L235.66 728.66M232.50 720.80L232.50 730.20M235.66 722.34L229.34 728.66M242.80 725.50L252.20 725.50M244.34 722.34L250.66 728.66M247.50 720.80L247.50 730.20M250.66 722.34L244.34 728.66M258.80 725.50L268.20 725.50M260.34 722.34L266.66 728.66M263.50 720.80L263.50 730.20M266.66 722.34L260.34 728.66M274.80 725.50L284.20 725.50M276.34 722.34L282.66 728.66M279.50 720.80L279.50 730.20M282.66 722.34L276.34 728.66M290.80 725.50L300.20 725.50M292.34 722.34L298.66 728.66M295.50 720.80L295.50 730.20M298.66 722.34L292.34 728.66M306.80 725.50L316.20 725.50M308.34 722.34L314.66 728.66M311.50 720.80L311.50 730.20M314.66 722.34L308.34 728.66M322.80 725.50L332.20 725.50M324.34 722.34L330.66 728.66M327.50 720.80L327.50 730.20M330.66 722.34L324.34 728.66M337.80 725.50L347.20 725.50M339.34 722.34L345.66 728.66M342.50 720.80L342.50 730.20M345.66 722.34L339.34 728.66M353.80 725.50L363.20 725.50M355.34 722.34L361.66 728.66M358.50 720.80L358.50 730.20M361.66 722.34L355.34 728.66M369.80 725.50L379.20 725.50M371.34 722.34L377.66 728.66M374.50 720.80L374.50 730.20M377.66 722.34L371.34 728.66M385.80 725.50L395.20 725.50M387.34 722.34L393.66 728.66M390.50 720.80L390.50 730.20M393.66 722.34L387.34 728.66M401.80 687.40L411.20 687.40M403.34 684.24L409.66 690.56M406.50 682.70L406.50 692.10M409.66 684.24L403.34 690.56M417.80 687.40L427.20 687.40M419.34 684.24L425.66 690.56M422.50 682.70L422.50 692.10M425.66 684.24L419.34 690.56M432.80 687.40L442.20 687.40M434.34 684.24L440.66 690.56M437.50 682.70L437.50 692.10M440.66 684.24L434.34 690.56M448.80 687.40L458.20 687.40M450.34 684.24L456.66 690.56M453.50 682.70L453.50 692.10M456.66 684.24L450.34 690.56M464.80 687.40L474.20 687.40M466.34 684.24L472.66 690.56M469.50 682.70L469.50 692.10M472.66 684.24L466.34 690.56M480.80 687.40L490.20 687.40M482.34 684.24L488.66 690.56M485.50 682.70L485.50 692.10M488.66 684.24L482.34 690.56M496.80 687.40L506.20 687.40M498.34 684.24L504.66 690.56M501.50 682.70L501.50 692.10M504.66 684.24L498.34 690.56M512.80 687.40L522.20 687.40M514.34 684.24L520.66 690.56M517.50 682.70L517.50 692.10M520.66 684.24L514.34 690.56M527.80 687.40L537.20 687.40M529.34 684.24L535.66 690.56M532.50 682.70L532.50 692.10M535.66 684.24L529.34 690.56M543.80 687.40L553.20 687.40M545.34 684.24L551.66 690.56M548.50 682.70L548.50 692.10M551.66 684.24L545.34 690.56M559.80 687.40L569.20 687.40M561.34 684.24L567.66 690.56M564.50 682.70L564.50 692.10M567.66 684.24L561.34 690.56M575.80 687.40L585.20 687.40M577.34 684.24L583.66 690.56M580.50 682.70L580.50 692.10M583.66 684.24L577.34 690.56M591.80 687.40L601.20 687.40M593.34 684.24L599.66 690.56M596.50 682.70L596.50 692.10M599.66 684.24L593.34 690.56M607.80 687.40L617.20 687.40M609.34 684.24L615.66 690.56M612.50 682.70L612.50 692.10M615.66 684.24L609.34 690.56M622.80 687.40L632.20 687.40M624.34 684.24L630.66 690.56M627.50 682.70L627.50 692.10M630.66 684.24L624.34 690.56M638.80 687.40L648.20 687.40M640.34 684.24L646.66 690.56M643.50 682.70L643.50 692.10M646.66 684.24L640.34 690.56M654.80 687.40L664.20 687.40M656.34 684.24L662.66 690.56M659.50 682.70L659.50 692.10M662.66 684.24L656.34 690.56M670.80 687.40L680.20 687.40M672.34 684.24L678.66 690.56M675.50 682.70L675.50 692.10M678.66 684.24L672.34 690.56M686.80 687.40L696.20 687.40M688.34 684.24L694.66 690.56M691.50 682.70L691.50 692.10M694.66 684.24L688.34 690.56M702.80 687.40L712.20 687.40M704.34 684.24L710.66 690.56M707.50 682.70L707.50 692.10M710.66 684.24L704.34 690.56M717.80 687.40L727.20 687.40M719.34 684.24L725.66 690.56M722.50 682.70L722.50 692.10M725.66 684.24L719.34 690.56M733.80 687.40L743.20 687.40M735.34 684.24L741.66 690.56M738.50 682.70L738.50 692.10M741.66 684.24L735.34 690.56M749.80 687.40L759.20 687.40M751.34 684.24L757.66 690.56M754.50 682.70L754.50 692.10M757.66 684.24L751.34 690.56M765.80 687.40L775.20 687.40M767.34 684.24L773.66 690.56M770.50 682.70L770.50 692.10M773.66 684.24L767.34 690.56M781.80 687.40L791.20 687.40M783.34 684.24L789.66 690.56M786.50 682.70L786.50 692.10M789.66 684.24L783.34 690.56M797.80 687.40L807.20 687.40M799.34 684.24L805.66 690.56M802.50 682.70L802.50 692.10M805.66 684.24L799.34 690.56M812.80 687.40L822.20 687.40M814.34 684.24L820.66 690.56M817.50 682.70L817.50 692.10M820.66 684.24L814.34 690.56M828.80 687.40L838.20 687.40M830.34 684.24L836.66 690.56M833.50 682.70L833.50 692.10M836.66 684.24L830.34 690.56M844.80 687.40L854.20 687.40M846.34 684.24L852.66 690.56M849.50 682.70L849.50 692.10M852.66 684.24L846.34 690.56M860.80 687.40L870.20 687.40M862.34 684.24L868.66 690.56M865.50 682.70L865.50 692.10M868.66 684.24L862.34 690.56" stroke="#D6008E" stroke-width="1.4" stroke-linecap="butt"/>
</g>
<g font-family="'Liberation Sans',Arial,sans-serif" font-size="12.05" fill="#262626">
<text x="74.9" y="790" text-anchor="middle">0</text><text x="153.9" y="790" text-anchor="middle">500</text><text x="232.9" y="790" text-anchor="middle">1000</text><text x="311.9" y="790" text-anchor="middle">1500</text><text x="390.9" y="790" text-anchor="middle">2000</text><text x="470.9" y="790" text-anchor="middle">2500</text><text x="549.9" y="790" text-anchor="middle">3000</text><text x="628.9" y="790" text-anchor="middle">3500</text><text x="707.9" y="790" text-anchor="middle">4000</text><text x="786.9" y="790" text-anchor="middle">4500</text><text x="865.9" y="790" text-anchor="middle">5000</text>
<text x="70.3" y="123.5" text-anchor="end">0</text><text x="70.3" y="189.4" text-anchor="end">-500</text><text x="70.3" y="254.4" text-anchor="end">-1000</text><text x="70.3" y="320.4" text-anchor="end">-1500</text><text x="70.3" y="385.4" text-anchor="end">-2000</text><text x="70.3" y="451.4" text-anchor="end">-2500</text><text x="70.3" y="517.5" text-anchor="end">-3000</text><text x="70.3" y="582.5" text-anchor="end">-3500</text><text x="70.3" y="648.5" text-anchor="end">-4000</text><text x="70.3" y="713.5" text-anchor="end">-4500</text><text x="70.3" y="779.5" text-anchor="end">-5000</text>
<text x="470" y="805" text-anchor="middle" font-size="13.3">Episode Number</text>
<text transform="translate(31.8 448) rotate(-90)" text-anchor="middle" font-size="13.3">Episode Reward</text>
<text x="470" y="113.7" text-anchor="middle" font-size="13.18" font-weight="bold">Episode reward for SimplePendlumWithImageDiscreteAction with rlACAgent</text>
</g>
</svg>
<svg width="0" height="0" style="left:0;top:0">
 <defs>
  <g id="i-hand" fill="none" stroke-linejoin="round" stroke-linecap="round">
   <path d="M5.7 15L0.8 7.7C0.3 6.8 1.4 6.1 2.2 6.6L4.2 8.1V3C4.2 1.3 6.5 1.3 6.7 2.6C6.7 0.3 9.8 0.3 9.9 2.6C10.1 1.3 12.9 1.3 12.9 3.2V4.4C13.2 3.2 15.3 3.3 15.2 5C15 9 14 12 13.2 15Z"/><path d="M6.8 2.6V6.8M9.9 2.6V6.8M12.9 4.4V6.8" stroke-width="1.3"/>
  </g>
  <g id="i-zin" fill="none"><circle cx="6.5" cy="6.5" r="6"/><path d="M3.2 6.5H9.8M6.5 3.2V9.8"/><path d="M10.8 10.8L15.6 15.6" stroke-width="1.35"/></g>
  <g id="i-zout" fill="none"><circle cx="6.5" cy="6.5" r="6"/><path d="M3.2 6.5H9.8"/><path d="M10.8 10.8L15.6 15.6" stroke-width="1.35"/></g>
  <g id="i-home" fill="none"><path d="M0.3 8.4L8.1 0.6L15.9 8.4M2.5 8V15.5H6.2V10.4H10V15.5H13.9V8"/><path d="M11.2 1.4H14V4.2Z" fill="currentColor" stroke="none"/></g>
  <g id="i-exp" fill="none" stroke-linejoin="round"><path d="M4.4 9.5H12.8V13.5H0.3V9.5H2"/><path d="M2.6 11.2C2.6 6.4 5.4 3.6 9.4 3.4V1.2L12.8 4.7L9.4 8.2V6C7 6.1 5 7.6 4.6 11.2"/><path d="M12.6 14.8H16.2V11.2Z" fill="currentColor" stroke="none"/></g>
  <g id="i-brush" fill="none" stroke-linejoin="miter"><path d="M8.4 7V0.5H12.7V7M6.7 7H14.5V10.2H6.7ZM6.7 8.6H14.5M6.7 10.2C6.2 12.6 4.2 14.6 1.6 15.6H14.5V10.2"/><path d="M5.6 15.6L14.5 12.6V15.6Z" fill="currentColor" stroke="none"/></g>
  <g id="i-tip" fill="none"><path d="M2.4 0.6H15.6V15.6H2.4V9.8L0.5 8.1L2.4 6.4Z"/><path d="M5.3 6.6H13M5.3 9.5H13"/></g>
 </defs>
</svg>

<svg style="left:760px;top:82px;color:#5e5e5e" width="120" height="26" viewBox="760 82 120 26" stroke="#5e5e5e" stroke-width="1">
 <use href="#i-exp" x="768" y="86" stroke="#777" style="color:#777"/>
 <use href="#i-hand" x="788" y="86"/>
 <use href="#i-zin" x="808" y="86"/>
 <use href="#i-zout" x="828" y="86"/>
 <use href="#i-home" x="848" y="86"/>
</svg>

<div class="pbar"></div>
<div class="btn" style="left:1081px;top:92px;width:110px;height:25px;border-color:#c9c9c9;color:#b3b3b3;font-size:12px;line-height:23px">Training stopped</div>
<div class="lbl" style="left:911px;top:128px">Episode number:</div><div class="lbl" style="left:1041px;top:128px">5000/5000</div>
<div class="lbl" style="left:911px;top:153px">Start time:</div><div class="lbl" style="left:1041px;top:153px">21-Nov-2024 17:35:50</div>
<div class="lbl" style="left:911px;top:178px">Duration:</div><div class="lbl" style="left:1041px;top:178px">11:43:05</div>
<div class="lbl" style="left:911px;top:203px">Final result:</div><div class="lbl" style="left:1041px;top:202px;line-height:15px;white-space:normal;width:140px">Training finished with maximum number of episodes.</div>

<div class="panel" style="left:911px;top:258px;width:280px;height:295px">
 <div class="phead"><span>Training Information</span></div>
 <div style="left:10px;top:30px;width:258px;height:95px;border:1px solid #7d7d7d;background:#fff">
  <div style="left:0;top:0;width:256px;height:27px;background:#f5f5f5;border-bottom:1px solid #7d7d7d"></div>
  <div style="left:0;top:27px;width:256px;height:25px;background:#268cdd"></div>
  <div style="left:128px;top:0;width:1px;height:52px;background:#7d7d7d"></div>
  <div class="lbl" style="left:3px;top:7px;font-weight:bold;font-size:12px;color:#111">Agent</div>
  <div class="lbl" style="left:132px;top:7px;font-weight:bold;font-size:12px;color:#111;letter-spacing:-0.28px">Status</div>
  <div class="lbl" style="left:3px;top:30px;color:#fff;text-shadow:0 0 .4px #fff">rlACAgent</div>
  <div class="lbl" style="left:132px;top:30px;color:#fff;text-shadow:0 0 .4px #fff">Training finished</div>
 </div>
 <div class="lbl" style="left:10px;top:136px;font-size:12px;font-weight:bold;line-height:15px">Episode Information (rlACAgent):</div>
 <div class="lbl" style="left:10px;top:161px">Episode reward:</div><div class="lbl" style="left:130px;top:161px">-4332.3844</div>
 <div class="lbl" style="left:10px;top:186px">Average reward:</div><div class="lbl" style="left:130px;top:186px">-4332.3844</div>
 <div class="lbl" style="left:10px;top:211px">Episode Q0:</div><div class="lbl" style="left:130px;top:211px">-866.4693</div>
 <div class="lbl" style="left:10px;top:236px">Evaluation statistic:</div><div class="lbl" style="left:130px;top:236px">-4332.3844</div>
 <div class="btn" style="left:158px;top:260px;width:110px;height:23px;font-size:12px;line-height:21px;color:#1a1a1a">More Details...</div>
</div>

<div class="panel" style="left:911px;top:563px;width:280px;height:118px">
 <div class="phead"><span>Plot Options</span></div>
 <div class="cb" style="left:10px;top:31px"></div>
 <svg style="left:10px;top:31px" width="14" height="14" viewBox="0 0 14 14"><path d="M2.4 7L5.3 9.9L11.6 3.1" fill="none" stroke="#111" stroke-width="2"/></svg>
 <div class="lbl" style="left:27px;top:31px">Show EpisodeQ0</div>
 <div class="cb" style="left:10px;top:58px"></div>
 <svg style="left:10px;top:58px" width="14" height="14" viewBox="0 0 14 14"><path d="M2.4 7L5.3 9.9L11.6 3.1" fill="none" stroke="#111" stroke-width="2"/></svg>
 <div class="lbl" style="left:27px;top:58px">Show evaluation statistic</div>
 <div class="cb" style="left:10px;top:88px"></div>
 <div class="lbl" style="left:27px;top:87px">Show last N episodes</div>
 <div style="left:154px;top:83px;width:114px;height:23px;border:1px solid #c9c9c9;background:#f5f5f5"></div>
 <div class="lbl" style="left:154px;top:88px;width:109px;text-align:right;color:#a3a3a3">5000</div>
</div>

<div class="panel" style="left:911px;top:691px;width:280px;height:102px">
 <div style="left:5px;top:5px;width:268px;height:90px;background:#fff"></div>
 <svg style="left:0;top:0" width="278" height="100" viewBox="912 692 278 100">
  <g fill="none">
   <path d="M973.5 704.5H1013" stroke="#4DBEEE" stroke-width="1"/><circle cx="993.5" cy="704.5" r="1.5" fill="#4DBEEE"/>
   <path d="M973.5 723.5H1013" stroke="#0072BD" stroke-width="1"/><circle cx="993.5" cy="723.5" r="1.5" fill="#0072BD"/>
   <path d="M973.5 742.5H1013" stroke="#EDB120" stroke-width="1"/><circle cx="993.5" cy="742.5" r="1.5" fill="#EDB120"/>
   <path d="M988.6 770.5H998.4M993.5 765.6V775.4M990 767L997 774M990 774L997 767" stroke="#D6008E" stroke-width="0.85"/>
  </g>
  <g font-family="'Liberation Sans',Arial,sans-serif" font-size="10.8" fill="#262626">
   <text x="1017" y="708">Episode reward</text>
   <text x="1017" y="727">Average reward</text>
   <text x="1017" y="746">Episode Q0</text>
   <text x="1017" y="769">Evaluation statistic</text>
   <text x="1017" y="781">(MeanEpisodeReward)</text>
  </g>
  <rect x="1045" y="692" width="140" height="21" fill="#fefefe" fill-opacity="0.97"/>
 </svg>
 <svg style="left:130px;top:0;color:#5e5e5e" width="148" height="24" viewBox="1042 692 148 24" stroke="#5e5e5e" stroke-width="1">
 <use href="#i-exp" x="1047" y="695" stroke="#969696" style="color:#7c7c7c"/>
 <use href="#i-brush" x="1067" y="695"/>
 <use href="#i-tip" x="1087" y="695"/>
 <use href="#i-hand" x="1107" y="695"/>
 <use href="#i-zin" x="1127" y="695"/>
 <use href="#i-zout" x="1147" y="695"/>
 <use href="#i-home" x="1167" y="695"/>
</svg>
</div>

<div class="status"></div><div style="left:1px;top:828px;width:899px;height:1px;background:#7f7f7f"></div>
<svg style="left:1184px;top:832px" width="14" height="16" viewBox="1184 832 14 16"><path d="M1186 834.2L1192.6 840L1186 845.8Z" fill="#8c8c8c"/><rect x="1193" y="834" width="2" height="12" fill="#8c8c8c"/></svg>

<div class="vdiv"></div>
<div class="edgeT"></div><div class="edgeL"></div><div class="edgeR"></div><div class="edgeB"></div>
</div>
</body>
</html>
